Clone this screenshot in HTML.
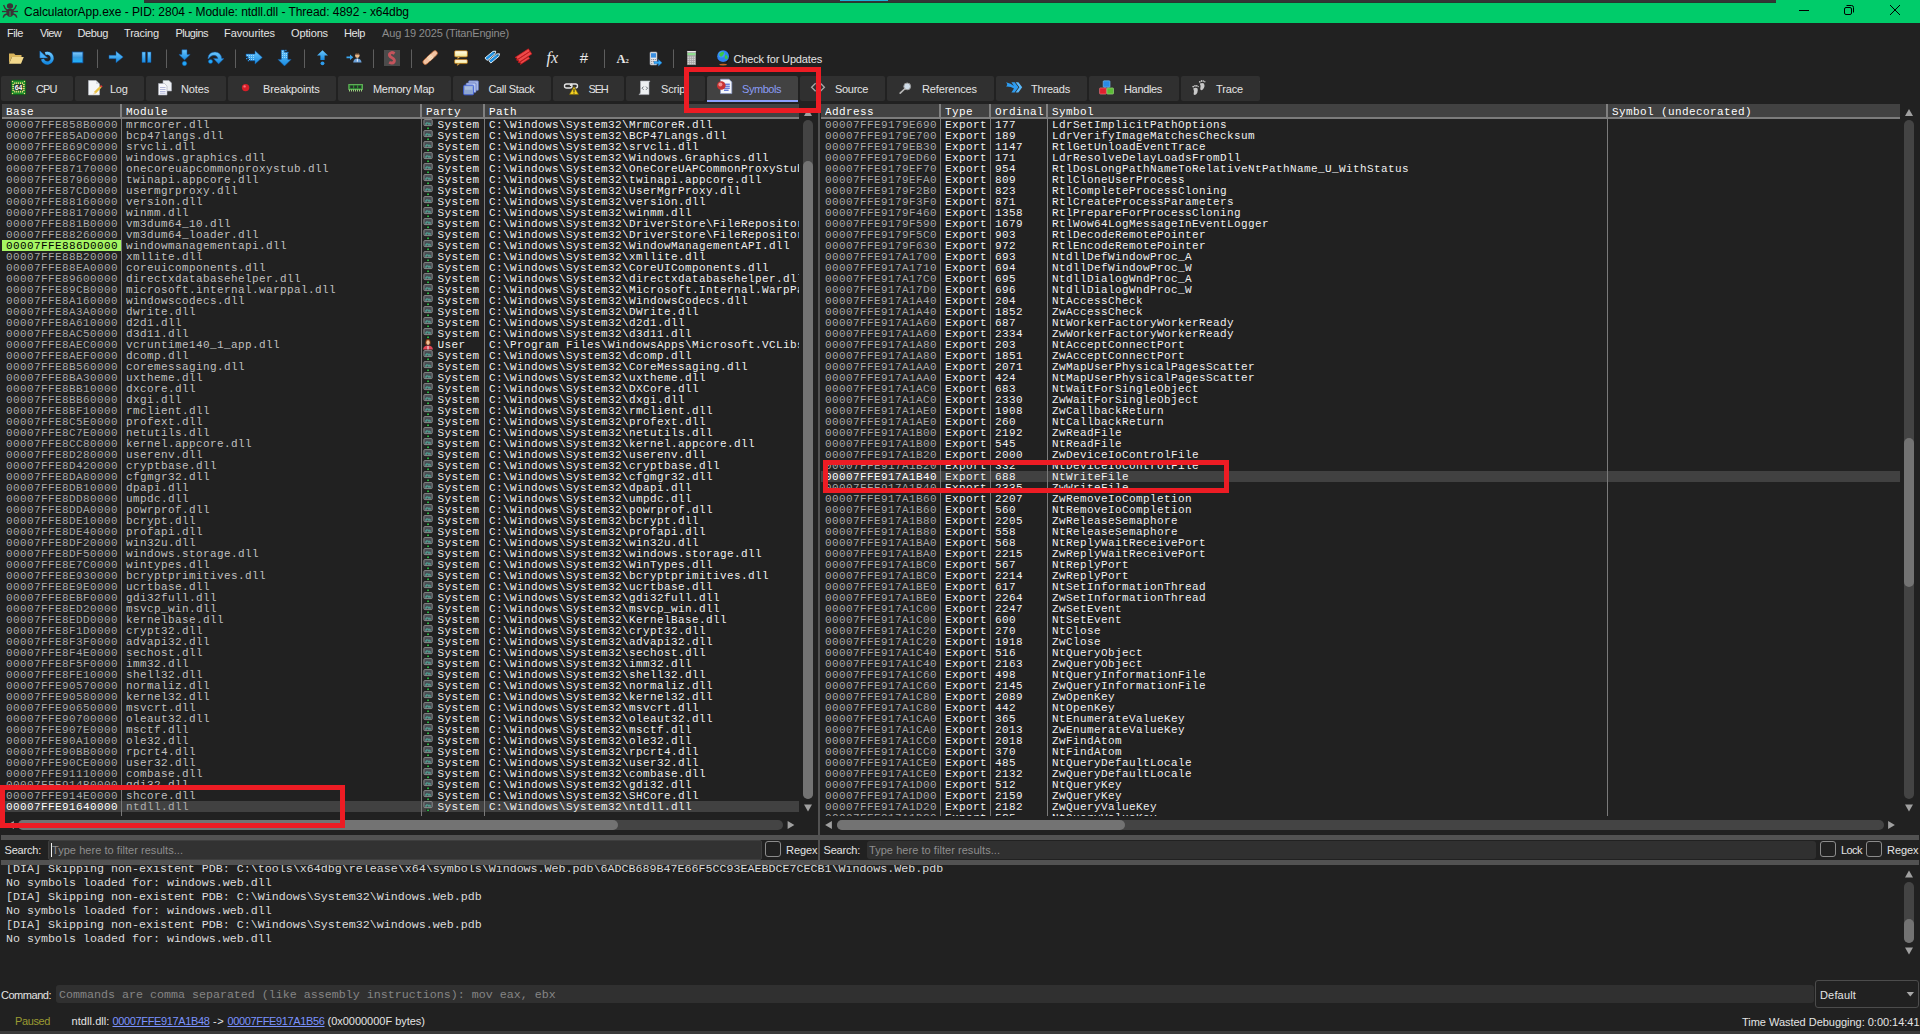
<!DOCTYPE html><html><head><meta charset="utf-8"><title>x64dbg</title><style>
*{margin:0;padding:0;box-sizing:border-box}
html,body{width:1920px;height:1034px;overflow:hidden;background:#212121}
body{position:relative;font-family:"Liberation Sans",sans-serif;font-size:11px;color:#e0e0e0}
.a{position:absolute;white-space:pre}
.ui{position:absolute;white-space:pre;transform-origin:0 50%;font-family:"Liberation Sans",sans-serif;font-size:11px;line-height:14px;height:14px;color:#e4e4e4}
.mono{font-family:"Liberation Mono",monospace;font-size:11px;letter-spacing:0.4px;line-height:11px;white-space:pre}
.tbl{position:absolute;overflow:hidden}
.row{position:absolute;left:0;height:11px;width:100%}
.c{position:absolute;top:0;height:13px;line-height:13px;overflow:hidden}
.hd{position:absolute;top:0;height:13px;background:#424242;color:#ffffff;line-height:16px;overflow:hidden}
.hb{position:absolute;height:2px;background:#7c7c7c}
.vs{position:absolute;width:2px;background:#808080}
.vl{position:absolute;width:1px;background:#7a7a7a}
.tab{position:absolute;top:76px;height:25px;background:#303030;border-radius:2px}
.log{font-family:"Liberation Mono",monospace;font-size:11.67px;line-height:14px;white-space:pre;color:#dcdcdc;position:absolute;left:6px}
.sb{position:absolute;background:#444444;border-radius:5px}
.th{position:absolute;background:#737373;border-radius:5px}
.red{position:absolute;border:5px solid #ed1c24}
svg{position:absolute;overflow:visible}
</style></head><body>
<div class="a" style="left:0;top:0;width:1920px;height:23px;background:#00cc6a"></div>
<div class="a" style="left:144px;top:0;width:1632px;height:3px;background:linear-gradient(#353535 0,#353535 66%,#263a2e 67%)"></div>
<div class="a" style="left:840px;top:0;width:48px;height:1px;background:#19b5d8"></div>
<svg style="left:0px;top:0px" width="20" height="22" viewBox="0 0 20 22"><g fill="#3a3236" stroke="#3a3236"><ellipse cx="10" cy="6" rx="3.1" ry="2.8" stroke="none"/><path d="M6.2 11 Q6.4 8.8 10 8.8 Q13.6 8.8 13.8 11 L13.4 14.6 Q12.4 17 10 17 Q7.6 17 6.6 14.6 Z" stroke="none"/><g fill="none" stroke-width="1.3" stroke-linecap="butt"><path d="M7.2 10 Q4.6 8.6 3.6 5"/><path d="M12.8 10 Q15.4 8.6 16.4 5"/><path d="M2 11.5 H18"/><path d="M7 14 Q3.8 14.6 3.2 17.6"/><path d="M13 14 Q16.2 14.6 16.8 17.6"/></g></g><rect x="9.4" y="11" width="1.2" height="5.4" fill="#149a54"/></svg>
<div class="ui" style="letter-spacing:-0.041px;left:24px;top:4px;font-size:12px;line-height:16px;height:16px;color:#000">CalculatorApp.exe - PID: 2804 - Module: ntdll.dll - Thread: 4892 - x64dbg</div>
<svg style="left:0;top:0" width="1920" height="23" viewBox="0 0 1920 23"><g fill="none" stroke="#000" stroke-width="1"><path d="M1799 10.5 H1809"/><rect x="1844.5" y="7.5" width="7" height="7" rx="1.5"/><path d="M1846.5 5.5 H1851.5 Q1853.5 5.5 1853.5 7.5 V12.5"/><path d="M1890 5 L1900 15 M1900 5 L1890 15"/></g></svg>
<div class="ui" style="letter-spacing:-0.434px;left:7px;top:26px">File</div>
<div class="ui" style="letter-spacing:-0.664px;left:40px;top:26px">View</div>
<div class="ui" style="letter-spacing:-0.384px;left:77.5px;top:26px">Debug</div>
<div class="ui" style="letter-spacing:-0.183px;left:124px;top:26px">Tracing</div>
<div class="ui" style="letter-spacing:-0.511px;left:175.5px;top:26px">Plugins</div>
<div class="ui" style="letter-spacing:-0.036px;left:224px;top:26px">Favourites</div>
<div class="ui" style="letter-spacing:-0.132px;left:291px;top:26px">Options</div>
<div class="ui" style="letter-spacing:-0.406px;left:344px;top:26px">Help</div>
<div class="ui" style="letter-spacing:-0.163px;left:382px;top:26px;color:#8c8c8c">Aug 19 2025 (TitanEngine)</div>
<svg style="left:0;top:0" width="1920" height="74" viewBox="0 0 1920 74"><defs><linearGradient id="gb" x1="0" y1="0" x2="0" y2="1"><stop offset="0" stop-color="#6cc8ff"/><stop offset="1" stop-color="#168ae0"/></linearGradient><linearGradient id="gs" x1="0" y1="0" x2="0" y2="1"><stop offset="0" stop-color="#84ccff"/><stop offset="0.5" stop-color="#3a9ade"/><stop offset="1" stop-color="#1cb4ff"/></linearGradient><linearGradient id="gy" x1="0" y1="0" x2="0" y2="1"><stop offset="0" stop-color="#fffdf0"/><stop offset="0.5" stop-color="#fbf2c0"/><stop offset="1" stop-color="#f0e08c"/></linearGradient></defs><rect x="97" y="49.5" width="1" height="18.5" fill="#5e5e5e"/><rect x="166" y="49.5" width="1" height="18.5" fill="#5e5e5e"/><rect x="235" y="49.5" width="1" height="18.5" fill="#5e5e5e"/><rect x="304" y="49.5" width="1" height="18.5" fill="#5e5e5e"/><rect x="373" y="49.5" width="1" height="18.5" fill="#5e5e5e"/><rect x="411" y="49.5" width="1" height="18.5" fill="#5e5e5e"/><rect x="604" y="49.5" width="1" height="18.5" fill="#5e5e5e"/><rect x="673" y="49.5" width="1" height="18.5" fill="#5e5e5e"/><path d="M9 53.5 H14 L15.5 55 H21.5 V57 H12 L9 63.5 Z" fill="#d8b45c"/><path d="M12 57 H23.8 L21 63.7 H9 Z" fill="#f2d88c"/><path d="M45.3 53.6 A4.9 4.9 0 1 1 42.5 59.2" fill="none" stroke="#0c5aa8" stroke-width="3.8" opacity="0.55"/><path d="M45.3 53.6 A4.9 4.9 0 1 1 42.5 59.2" fill="none" stroke="url(#gb)" stroke-width="2.9"/><path d="M39.9 51 V57.9 H47.6 Z" fill="#48b0f8" stroke="#1470c8" stroke-width="0.5"/><rect x="72.3" y="52" width="10.6" height="10.8" fill="url(#gs)" stroke="#0e58a8" stroke-width="0.8"/><path d="M109 55.3 H116 V51.2 L123.2 57 L116 62.8 V58.7 H109 Z" fill="url(#gb)" stroke="#0e58a8" stroke-width="0.5"/><rect x="142" y="52" width="3.4" height="10.5" fill="url(#gb)" stroke="#0e58a8" stroke-width="0.5"/><rect x="147.6" y="52" width="3.4" height="10.5" fill="url(#gb)" stroke="#0e58a8" stroke-width="0.5"/><path d="M181.9 49.8 H187 V54.4 H190.2 L184.5 59.9 L178.9 54.4 H181.9 Z" fill="url(#gb)" stroke="#0e58a8" stroke-width="0.5"/><circle cx="184.5" cy="63.5" r="2.2" fill="#22a8f8" stroke="#0e58a8" stroke-width="0.5"/><path d="M207.8 58.4 Q208.8 52 215 52 Q220.8 52 221.7 58.5 L224 58.5 L218.6 63.9 L213.4 58.5 L217.9 58.5 Q217 55.3 214 55.3 Q210.6 55.3 208.8 58.8 Z" fill="url(#gb)" stroke="#0e58a8" stroke-width="0.5"/><circle cx="210.5" cy="61.5" r="2.1" fill="#22a8f8" stroke="#0e58a8" stroke-width="0.5"/><path d="M246 54 H255 V50.7 L262.3 57.4 L255 64.1 V60.8 H249.8 V58.8 H247.8 V56.6 H246 Z" fill="url(#gb)" stroke="#0e58a8" stroke-width="0.5"/><rect x="246" y="58" width="1.3" height="1.3" fill="#2a90e0"/><rect x="247.8" y="60" width="1.3" height="1.3" fill="#2a90e0"/><g fill="#9cdcff"><rect x="247" y="55" width="1" height="1"/><rect x="249" y="55" width="1" height="1"/><rect x="249" y="57" width="1" height="1"/><rect x="249" y="59" width="1" height="1"/><rect x="251" y="55" width="1" height="1"/><rect x="251" y="57" width="1" height="1"/><rect x="251" y="59" width="1" height="1"/><rect x="253" y="55" width="1" height="1"/><rect x="253" y="57" width="1" height="1"/><rect x="253" y="59" width="1" height="1"/></g><path d="M281.3 50 H284.4 V52.2 H287.8 V59.4 H291.1 L284.5 66 L278 59.4 H281.3 Z" fill="url(#gb)" stroke="#0e58a8" stroke-width="0.5"/><rect x="285.2" y="49.8" width="1.3" height="1.3" fill="#2a90e0"/><rect x="287.2" y="51.9" width="1.3" height="1.3" fill="#2a90e0" opacity="0.8"/><g fill="#9cdcff"><rect x="282" y="51" width="1" height="1"/><rect x="282" y="53" width="1" height="1"/><rect x="282" y="55" width="1" height="1"/><rect x="282" y="57" width="1" height="1"/><rect x="284" y="53" width="1" height="1"/><rect x="284" y="55" width="1" height="1"/><rect x="284" y="57" width="1" height="1"/><rect x="286" y="53" width="1" height="1"/><rect x="286" y="55" width="1" height="1"/><rect x="286" y="57" width="1" height="1"/></g><path d="M320.4 60 V55.5 H317 L322.5 50.3 L328 55.5 H324.6 V60 Z" fill="url(#gb)"/><circle cx="322.5" cy="63.3" r="1.9" fill="#2e9cec"/><path d="M346.5 56.5 H350 V54.5 L353.3 57.3 L350 60 V58.2 H346.5 Z" fill="#3ba6f0"/><circle cx="357.3" cy="55.6" r="2.3" fill="#e8b88a"/><path d="M355 54.6 Q357.3 51.6 359.6 54.6 Z" fill="#4a3020"/><path d="M353.2 62.6 Q353.6 58.4 357.3 58.4 Q361 58.4 361.6 62.6 Z" fill="#6a9fd8"/><rect x="356.8" y="58.6" width="1" height="3" fill="#fff"/><rect x="384" y="50" width="16" height="16" fill="#4b4b4b"/><path d="M394.6 53.5 Q391 51.4 389.6 54 Q388.8 56.2 392 57.8 Q395.4 59.6 394 62 Q392.4 64 389.2 62.2" fill="none" stroke="#c4545c" stroke-width="2.9"/><g transform="rotate(-42.5 430.2 57.6)"><rect x="421.2" y="55.1" width="18" height="5" rx="2.5" fill="#f2c4a2" stroke="#b8602c" stroke-width="0.7"/><rect x="427.8" y="55.3" width="4.8" height="4.6" fill="#f8dcc0"/><path d="M429 56.5 h0.8 M430.8 56.5 h0.8 M429 58.4 h0.8 M430.8 58.4 h0.8" stroke="#e8b078" stroke-width="0.7"/></g><rect x="454.6" y="50.7" width="12.8" height="6.2" rx="1.2" fill="url(#gy)" stroke="#b47410" stroke-width="0.8"/><path d="M457.8 56.8 L457.6 58.8 L460 56.8 Z" fill="#fff4c0" stroke="#b47410" stroke-width="0.5"/><rect x="454.6" y="59.6" width="12.8" height="4" rx="1.2" fill="url(#gy)" stroke="#b47410" stroke-width="0.8"/><path d="M457.8 63.5 L457.2 65.6 L460 63.5 Z" fill="#fff4c0" stroke="#b47410" stroke-width="0.5"/><g transform="translate(486 59.2) rotate(-39.5)"><path d="M0 -1.6 H10.4 L12.6 0 L10.4 1.6 H0 Z" fill="#1e8fe0" stroke="#f4faff" stroke-width="0.8"/><circle cx="10.6" cy="0" r="0.55" fill="#202020"/></g><g transform="translate(489.8 61.8) rotate(-39.5)"><path d="M0 -1.6 H10.4 L12.6 0 L10.4 1.6 H0 Z" fill="#1e8fe0" stroke="#f4faff" stroke-width="0.8"/><circle cx="10.6" cy="0" r="0.55" fill="#202020"/></g><g transform="translate(515.8 58.8) rotate(-33)"><path d="M0 -1.5 H16 V1.5 H0 L1.6 0 Z" fill="#ee4a4a" stroke="#cc1418" stroke-width="0.6"/></g><g transform="translate(517.6 61.4) rotate(-33)"><path d="M0 -1.5 H16 V1.5 H0 L1.6 0 Z" fill="#ee4a4a" stroke="#cc1418" stroke-width="0.6"/></g><g transform="translate(519.8 63.6) rotate(-33)"><path d="M0 -1.1 H11 V1.1 H0 L1.4 0 Z" fill="#ee4a4a" stroke="#cc1418" stroke-width="0.6"/></g></svg><div class="a" style="left:546.5px;top:48px;font-family:'Liberation Serif',serif;font-style:italic;font-size:16px;line-height:20px;color:#e8e8e8">fx</div><div class="a" style="left:579.5px;top:50px;font-family:'Liberation Sans',sans-serif;font-style:italic;font-size:15px;line-height:16px;color:#e8e8e8">#</div><div class="a" style="left:616.5px;top:51px;font-family:'Liberation Serif',serif;font-weight:bold;font-size:12.5px;line-height:16px;color:#e8e8e8">A<span style="font-size:6.5px">2</span></div><svg style="left:0;top:0" width="1920" height="74" viewBox="0 0 1920 74"><rect x="650" y="52" width="7" height="13" rx="1" fill="#e6e8ec" stroke="#9a9ea8" stroke-width="0.6"/><rect x="651" y="53.2" width="5" height="4.4" fill="#3a8ee0"/><g fill="#8a8e98"><rect x="651.2" y="59" width="1.1" height="1.1"/><rect x="653" y="59" width="1.1" height="1.1"/><rect x="654.8" y="59" width="1.1" height="1.1"/><rect x="651.2" y="61" width="1.1" height="1.1"/><rect x="653" y="61" width="1.1" height="1.1"/><rect x="651.2" y="63" width="1.1" height="1.1"/></g><path d="M654 61.6 H658.4 V59.4 L662 62.7 L658.4 66 V63.8 H654 Z" fill="#36acf8" stroke="#1468c0" stroke-width="0.5"/><rect x="686.7" y="50.4" width="9.7" height="15" rx="0.8" fill="#a6a6a6" stroke="#141414" stroke-width="0.9"/><rect x="687.4" y="51" width="8.3" height="1.2" fill="#e8e8e8"/><rect x="687.6" y="53" width="7.9" height="2.2" fill="#8ede8e"/><g fill="#d2d2d2"><rect x="687.7" y="56.6" width="1.3" height="1.3"/><rect x="687.7" y="58.7" width="1.3" height="1.3"/><rect x="687.7" y="60.800000000000004" width="1.3" height="1.3"/><rect x="687.7" y="62.900000000000006" width="1.3" height="1.3"/><rect x="689.7" y="56.6" width="1.3" height="1.3"/><rect x="689.7" y="58.7" width="1.3" height="1.3"/><rect x="689.7" y="60.800000000000004" width="1.3" height="1.3"/><rect x="689.7" y="62.900000000000006" width="1.3" height="1.3"/><rect x="691.7" y="56.6" width="1.3" height="1.3"/><rect x="691.7" y="58.7" width="1.3" height="1.3"/><rect x="691.7" y="60.800000000000004" width="1.3" height="1.3"/><rect x="691.7" y="62.900000000000006" width="1.3" height="1.3"/><rect x="693.7" y="56.6" width="1.3" height="1.3"/><rect x="693.7" y="58.7" width="1.3" height="1.3"/><rect x="693.7" y="60.800000000000004" width="1.3" height="1.3"/><rect x="693.7" y="62.900000000000006" width="1.3" height="1.3"/></g><path d="M727.6 51.4 Q731.6 57.4 726.4 63" fill="none" stroke="#141414" stroke-width="1"/><circle cx="723.1" cy="56.2" r="5.9" fill="#2c84f0"/><circle cx="721.6" cy="54.4" r="3.2" fill="#5aa8ff" opacity="0.55"/><path d="M719.4 53.8 Q721 52 723.4 51.6 Q725 53 723.4 54.6 Q722.4 57 720.4 56.6 Q718.8 55.6 719.4 53.8 Z M725.4 54.6 Q728 55.4 727.8 58 Q726.6 60 725 58.6 Q724.4 56.4 725.4 54.6 Z" fill="#38c848"/><ellipse cx="723.1" cy="64.6" rx="3.8" ry="0.9" fill="#c86420"/></svg>
<div class="ui" style="letter-spacing:-0.153px;left:733.5px;top:52px">Check for Updates</div>
<div class="tab" style="left:1px;width:72px;height:25px;background:#303030"></div>
<div class="ui" style="letter-spacing:-0.845px;left:36px;top:82px;color:#e4e4e4">CPU</div>
<svg style="left:11px;top:80px" width="16" height="16" viewBox="0 0 16 16"><rect x="0.4" y="0.2" width="14.3" height="14.4" rx="0.8" fill="#22922e" stroke="#0c5c14" stroke-width="0.8"/><g fill="#f2dc80"><rect x="3.3" y="2.3" width="1" height="2"/><rect x="3.3" y="10.5" width="1" height="2"/><rect x="5.2" y="2.3" width="1" height="2"/><rect x="5.2" y="10.5" width="1" height="2"/><rect x="7.1" y="2.3" width="1" height="2"/><rect x="7.1" y="10.5" width="1" height="2"/><rect x="9.0" y="2.3" width="1" height="2"/><rect x="9.0" y="10.5" width="1" height="2"/><rect x="10.9" y="2.3" width="1" height="2"/><rect x="10.9" y="10.5" width="1" height="2"/><rect x="1.3" y="4.1" width="2" height="1"/><rect x="11.7" y="4.1" width="2" height="1"/><rect x="1.3" y="6.0" width="2" height="1"/><rect x="11.7" y="6.0" width="2" height="1"/><rect x="1.3" y="7.9" width="2" height="1"/><rect x="11.7" y="7.9" width="2" height="1"/><rect x="1.3" y="9.8" width="2" height="1"/><rect x="11.7" y="9.8" width="2" height="1"/><rect x="0.9" y="0.9" width="1.2" height="1.2"/><rect x="12.9" y="0.9" width="1.2" height="1.2"/><rect x="0.9" y="12.9" width="1.2" height="1.2"/><rect x="12.9" y="12.9" width="1.2" height="1.2"/></g><rect x="3.3" y="4.2" width="8.5" height="6.4" rx="0.6" fill="#262626"/><text x="7.55" y="10" font-family="Liberation Sans" font-weight="bold" font-size="7" fill="#fff" text-anchor="middle">64</text></svg>
<div class="tab" style="left:75px;width:69px;height:25px;background:#303030"></div>
<div class="ui" style="letter-spacing:-0.286px;left:110px;top:82px;color:#e4e4e4">Log</div>
<svg style="left:87px;top:80px" width="16" height="16" viewBox="0 0 16 16"><path d="M1.5 0.5 H9 L12.5 4 V15 H1.5 Z" fill="#f4f6f8" stroke="#b8bcc4" stroke-width="0.6"/><path d="M9 0.5 V4 H12.5" fill="#d8dce4"/><path d="M6.5 14.4 L7.4 11.6 L13 6 L14.6 7.6 L9 13.2 Z" fill="#e8c040"/><path d="M13 6 L14 5 L15.6 6.6 L14.6 7.6 Z" fill="#e83838"/><path d="M6.5 14.4 L7.4 11.6 L9 13.2 Z" fill="#f0d8b0"/></svg>
<div class="tab" style="left:146px;width:80px;height:25px;background:#303030"></div>
<div class="ui" style="letter-spacing:-0.150px;left:181px;top:82px;color:#e4e4e4">Notes</div>
<svg style="left:157px;top:80px" width="16" height="16" viewBox="0 0 16 16"><path d="M6 0.5 H12 L14.5 3 V11 H6 Z" fill="#eef0f4" stroke="#a8acb8" stroke-width="0.6"/><path d="M1.5 3.5 H7.5 L10 6 V15 H1.5 Z" fill="#f8f8fc" stroke="#a8acb8" stroke-width="0.6"/><path d="M3 7.5 H8.5 M3 9.5 H8.5 M3 11.5 H8.5 M3 13.2 H8.5" stroke="#8890c8" stroke-width="0.6"/></svg>
<div class="tab" style="left:228px;width:108px;height:25px;background:#303030"></div>
<div class="ui" style="letter-spacing:-0.145px;left:263px;top:82px;color:#e4e4e4">Breakpoints</div>
<svg style="left:238px;top:80px" width="16" height="16" viewBox="0 0 16 16"><circle cx="7.6" cy="7.6" r="3.7" fill="#d81e28"/><circle cx="6.6" cy="6.4" r="1.2" fill="#f87078"/></svg>
<div class="tab" style="left:338px;width:113px;height:25px;background:#303030"></div>
<div class="ui" style="letter-spacing:-0.319px;left:373px;top:82px;color:#e4e4e4">Memory Map</div>
<svg style="left:348px;top:80px" width="16" height="16" viewBox="0 0 16 16"><rect x="0.8" y="4.4" width="13.6" height="5.2" fill="#2f8a34" stroke="#6cc060" stroke-width="0.8"/><g fill="#26302a"><rect x="2.2" y="5.6" width="2.8" height="2.6"/><rect x="6.2" y="5.6" width="2.8" height="2.6"/><rect x="10.2" y="5.6" width="2.8" height="2.6"/></g><path d="M1 10.6 H14.4" stroke="#9cd080" stroke-width="2" stroke-dasharray="1 1"/></svg>
<div class="tab" style="left:453px;width:98px;height:25px;background:#303030"></div>
<div class="ui" style="letter-spacing:-0.353px;left:488.5px;top:82px;color:#e4e4e4">Call Stack</div>
<svg style="left:463px;top:80px" width="16" height="16" viewBox="0 0 16 16"><rect x="5.5" y="0.8" width="10" height="9.6" rx="1" fill="#a8b8e8" stroke="#5a6eb8" stroke-width="0.7"/><rect x="3" y="3" width="10" height="9.6" rx="1" fill="#b8c8f0" stroke="#5a6eb8" stroke-width="0.7"/><rect x="0.6" y="5.2" width="10" height="9.6" rx="1.2" fill="#8ea6d0" stroke="#3c5cdc" stroke-width="0.9"/><rect x="2" y="6.4" width="7.2" height="3.4" fill="#b4c6e4" opacity="0.7"/></svg>
<div class="tab" style="left:553px;width:71px;height:25px;background:#303030"></div>
<div class="ui" style="letter-spacing:-1.208px;left:588.5px;top:82px;color:#e4e4e4">SEH</div>
<svg style="left:563px;top:80px" width="16" height="16" viewBox="0 0 16 16"><path d="M1.5 6 Q1.5 4 3.5 4 H7 Q9 4 9 6 Q9 8 7 8 H3.5 Q1.5 8 1.5 6 Z M7.5 6 Q7.5 4 9.5 4 H12.5 Q14.5 4 14.5 6 Q14.5 8 12.5 8" fill="none" stroke="#e4e4e4" stroke-width="1.4"/><path d="M11 6.5 L15.6 14.6 H6.4 Z" fill="#f4d020" stroke="#6a5a08" stroke-width="0.6"/><rect x="10.5" y="9" width="1" height="3" fill="#202020"/><rect x="10.5" y="12.6" width="1" height="1" fill="#202020"/></svg>
<div class="tab" style="left:626px;width:79px;height:25px;background:#303030"></div>
<div class="ui" style="letter-spacing:-0.188px;left:661px;top:82px;color:#e4e4e4">Script</div>
<svg style="left:636.5px;top:80px" width="16" height="16" viewBox="0 0 16 16"><path d="M3.5 1 H13 Q11.6 2.4 12 4 V14.6 H2 Q3.8 13.4 3.5 11.6 Z" fill="#eef0f2" stroke="#b0b4bc" stroke-width="0.6"/><path d="M6.6 6.6 L5 8.2 L6.6 9.8 M9 6.6 L10.6 8.2 L9 9.8" fill="none" stroke="#5a6068" stroke-width="0.9"/></svg>
<div class="tab" style="left:707px;width:91px;height:26px;background:#424242"></div>
<div class="a" style="left:707px;top:100px;width:91px;height:2px;background:#8c9efa"></div>
<div class="ui" style="letter-spacing:-0.455px;left:742px;top:82px;color:#8a9cf5">Symbols</div>
<svg style="left:716px;top:80px" width="16" height="16" viewBox="0 0 16 16"><path d="M4.5 -0.8 H13 L15.8 2 V13.6 H4.5 Z" fill="#f4f6fa" stroke="#8a98c8" stroke-width="0.7"/><path d="M8 4.2 H13.8 M8 6.2 H13.8 M8 8.2 H13.8 M8 10.2 H12.6" stroke="#2a48c8" stroke-width="1"/><circle cx="5.3" cy="5.5" r="4.3" fill="#c83232"/><circle cx="4.4" cy="4.4" r="2" fill="#f09090"/></svg>
<div class="tab" style="left:800px;width:85px;height:25px;background:#303030"></div>
<div class="ui" style="letter-spacing:-0.310px;left:835px;top:82px;color:#e4e4e4">Source</div>
<svg style="left:810px;top:80px" width="16" height="16" viewBox="0 0 16 16"><path d="M5.6 3.2 L1.6 7.2 L5.6 11.2 M10.4 3.2 L14.4 7.2 L10.4 11.2" fill="none" stroke="#a8a8a8" stroke-width="1.3"/></svg>
<div class="tab" style="left:887px;width:107px;height:25px;background:#303030"></div>
<div class="ui" style="letter-spacing:-0.127px;left:922px;top:82px;color:#e4e4e4">References</div>
<svg style="left:897px;top:80px" width="16" height="16" viewBox="0 0 16 16"><circle cx="10.2" cy="6.4" r="3.4" fill="#d0dce8" stroke="#989898" stroke-width="1"/><path d="M7.6 9 L3.2 13.2" stroke="#b8b8b8" stroke-width="1.7" stroke-linecap="round"/></svg>
<div class="tab" style="left:996px;width:90.5px;height:25px;background:#303030"></div>
<div class="ui" style="letter-spacing:-0.194px;left:1031px;top:82px;color:#e4e4e4">Threads</div>
<svg style="left:1006px;top:80px" width="16" height="16" viewBox="0 0 16 16"><path d="M0 2.2 Q5 3.4 8 6 L5.4 2.2 L8.6 2.2 L12.4 7.2 L8.6 12.4 L5.4 12.4 L8 8.6 Q5 6.4 0 6.6 Q2.4 4.6 0 2.2 Z" fill="#2e9cf0"/><path d="M9.6 2.2 L12.4 2.2 L16.2 7.2 L12.4 12.4 L9.6 12.4 L13.4 7.2 Z" fill="#5ab8fa"/></svg>
<div class="tab" style="left:1089px;width:89.5px;height:25px;background:#303030"></div>
<div class="ui" style="letter-spacing:-0.337px;left:1124px;top:82px;color:#e4e4e4">Handles</div>
<svg style="left:1099px;top:80px" width="16" height="16" viewBox="0 0 16 16"><rect x="4.2" y="0.8" width="6.8" height="6.4" rx="0.8" fill="#2a8ae4" stroke="#7cc0f8" stroke-width="0.6"/><rect x="0.6" y="7.9" width="6.8" height="6.2" rx="0.8" fill="#e0202e" stroke="#f88088" stroke-width="0.6"/><rect x="7.9" y="7.9" width="6.6" height="6.2" rx="0.8" fill="#5cbc38" stroke="#a8e088" stroke-width="0.6"/></svg>
<div class="tab" style="left:1181px;width:79px;height:25px;background:#303030"></div>
<div class="ui" style="letter-spacing:-0.144px;left:1216px;top:82px;color:#e4e4e4">Trace</div>
<svg style="left:1191px;top:80px" width="16" height="16" viewBox="0 0 16 16"><g fill="#c8c8c8"><path d="M2.2 8.4 Q4.6 7.2 6.4 8.2 Q7.4 10.4 6.4 12.6 Q5.4 15.2 3.6 15 Q2 14.6 2.8 12.4 Q3.2 10.6 2.2 8.4 Z"/><circle cx="2.2" cy="6.6" r="0.9"/><circle cx="4" cy="5.8" r="0.9"/><circle cx="5.8" cy="5.8" r="0.85"/><circle cx="7.2" cy="6.6" r="0.7"/><path d="M8.8 3.6 Q11.2 2.4 13 3.4 Q14 5.6 13 7.8 Q12 10.4 10.2 10.2 Q8.6 9.8 9.4 7.6 Q9.8 5.8 8.8 3.6 Z"/><circle cx="8.8" cy="1.8" r="0.9"/><circle cx="10.6" cy="1" r="0.9"/><circle cx="12.4" cy="1" r="0.85"/><circle cx="13.8" cy="1.8" r="0.7"/></g></svg>
<div class="tbl mono" style="left:2px;top:104px;width:797px;height:712px">
<div class="hd" style="left:0;width:797px"></div>
<div class="hd" style="left:4px;background:none">Base</div>
<div class="hd" style="left:124px;background:none">Module</div>
<div class="hd" style="left:424px;background:none">Party</div>
<div class="hd" style="left:487px;background:none">Path</div>
<div class="hb" style="left:0;top:13px;width:797px"></div>
<div class="vs" style="left:118px;top:0;height:15px"></div>
<div class="vl" style="left:119px;top:15px;height:698px"></div>
<div class="vs" style="left:418px;top:0;height:15px"></div>
<div class="vl" style="left:419px;top:15px;height:698px"></div>
<div class="vs" style="left:481px;top:0;height:15px"></div>
<div class="vl" style="left:482px;top:15px;height:698px"></div>
<div class="row" style="top:15px;">
<div class="c" style="left:4px;width:114px;color:#a8a8a8;">00007FFE858B0000</div>
<div class="c" style="left:124px;width:294px;color:#c0c0c0;">mrmcorer.dll</div>
<svg style="left:421px;top:0px" width="10" height="11" viewBox="0 0 10 11"><rect x="0.9" y="0.6" width="8.3" height="6" rx="0.9" fill="#484c52" stroke="#929292" stroke-width="0.9"/><path d="M2 5 H4 V3 M5 5 H8 M6 5 V3.5" stroke="#56b4a0" stroke-width="1" fill="none"/><rect x="3.4" y="8" width="3.2" height="2.6" fill="#1a1a1a"/><rect x="4.1" y="8.5" width="1.9" height="1.6" fill="#2cb846"/></svg>
<div class="c" style="left:435.5px;width:46px;color:#f0f0f0;">System</div>
<div class="c" style="left:487px;width:310px;color:#f0f0f0;">C:\Windows\System32\MrmCoreR.dll</div>
</div>
<div class="row" style="top:26px;">
<div class="c" style="left:4px;width:114px;color:#a8a8a8;">00007FFE85AD0000</div>
<div class="c" style="left:124px;width:294px;color:#c0c0c0;">bcp47langs.dll</div>
<svg style="left:421px;top:0px" width="10" height="11" viewBox="0 0 10 11"><rect x="0.9" y="0.6" width="8.3" height="6" rx="0.9" fill="#484c52" stroke="#929292" stroke-width="0.9"/><path d="M2 5 H4 V3 M5 5 H8 M6 5 V3.5" stroke="#56b4a0" stroke-width="1" fill="none"/><rect x="3.4" y="8" width="3.2" height="2.6" fill="#1a1a1a"/><rect x="4.1" y="8.5" width="1.9" height="1.6" fill="#2cb846"/></svg>
<div class="c" style="left:435.5px;width:46px;color:#f0f0f0;">System</div>
<div class="c" style="left:487px;width:310px;color:#f0f0f0;">C:\Windows\System32\BCP47Langs.dll</div>
</div>
<div class="row" style="top:37px;">
<div class="c" style="left:4px;width:114px;color:#a8a8a8;">00007FFE869C0000</div>
<div class="c" style="left:124px;width:294px;color:#c0c0c0;">srvcli.dll</div>
<svg style="left:421px;top:0px" width="10" height="11" viewBox="0 0 10 11"><rect x="0.9" y="0.6" width="8.3" height="6" rx="0.9" fill="#484c52" stroke="#929292" stroke-width="0.9"/><path d="M2 5 H4 V3 M5 5 H8 M6 5 V3.5" stroke="#56b4a0" stroke-width="1" fill="none"/><rect x="3.4" y="8" width="3.2" height="2.6" fill="#1a1a1a"/><rect x="4.1" y="8.5" width="1.9" height="1.6" fill="#2cb846"/></svg>
<div class="c" style="left:435.5px;width:46px;color:#f0f0f0;">System</div>
<div class="c" style="left:487px;width:310px;color:#f0f0f0;">C:\Windows\System32\srvcli.dll</div>
</div>
<div class="row" style="top:48px;">
<div class="c" style="left:4px;width:114px;color:#a8a8a8;">00007FFE86CF0000</div>
<div class="c" style="left:124px;width:294px;color:#c0c0c0;">windows.graphics.dll</div>
<svg style="left:421px;top:0px" width="10" height="11" viewBox="0 0 10 11"><rect x="0.9" y="0.6" width="8.3" height="6" rx="0.9" fill="#484c52" stroke="#929292" stroke-width="0.9"/><path d="M2 5 H4 V3 M5 5 H8 M6 5 V3.5" stroke="#56b4a0" stroke-width="1" fill="none"/><rect x="3.4" y="8" width="3.2" height="2.6" fill="#1a1a1a"/><rect x="4.1" y="8.5" width="1.9" height="1.6" fill="#2cb846"/></svg>
<div class="c" style="left:435.5px;width:46px;color:#f0f0f0;">System</div>
<div class="c" style="left:487px;width:310px;color:#f0f0f0;">C:\Windows\System32\Windows.Graphics.dll</div>
</div>
<div class="row" style="top:59px;">
<div class="c" style="left:4px;width:114px;color:#a8a8a8;">00007FFE87170000</div>
<div class="c" style="left:124px;width:294px;color:#c0c0c0;">onecoreuapcommonproxystub.dll</div>
<svg style="left:421px;top:0px" width="10" height="11" viewBox="0 0 10 11"><rect x="0.9" y="0.6" width="8.3" height="6" rx="0.9" fill="#484c52" stroke="#929292" stroke-width="0.9"/><path d="M2 5 H4 V3 M5 5 H8 M6 5 V3.5" stroke="#56b4a0" stroke-width="1" fill="none"/><rect x="3.4" y="8" width="3.2" height="2.6" fill="#1a1a1a"/><rect x="4.1" y="8.5" width="1.9" height="1.6" fill="#2cb846"/></svg>
<div class="c" style="left:435.5px;width:46px;color:#f0f0f0;">System</div>
<div class="c" style="left:487px;width:310px;color:#f0f0f0;">C:\Windows\System32\OneCoreUAPCommonProxyStub.dll</div>
</div>
<div class="row" style="top:70px;">
<div class="c" style="left:4px;width:114px;color:#a8a8a8;">00007FFE87960000</div>
<div class="c" style="left:124px;width:294px;color:#c0c0c0;">twinapi.appcore.dll</div>
<svg style="left:421px;top:0px" width="10" height="11" viewBox="0 0 10 11"><rect x="0.9" y="0.6" width="8.3" height="6" rx="0.9" fill="#484c52" stroke="#929292" stroke-width="0.9"/><path d="M2 5 H4 V3 M5 5 H8 M6 5 V3.5" stroke="#56b4a0" stroke-width="1" fill="none"/><rect x="3.4" y="8" width="3.2" height="2.6" fill="#1a1a1a"/><rect x="4.1" y="8.5" width="1.9" height="1.6" fill="#2cb846"/></svg>
<div class="c" style="left:435.5px;width:46px;color:#f0f0f0;">System</div>
<div class="c" style="left:487px;width:310px;color:#f0f0f0;">C:\Windows\System32\twinapi.appcore.dll</div>
</div>
<div class="row" style="top:81px;">
<div class="c" style="left:4px;width:114px;color:#a8a8a8;">00007FFE87CD0000</div>
<div class="c" style="left:124px;width:294px;color:#c0c0c0;">usermgrproxy.dll</div>
<svg style="left:421px;top:0px" width="10" height="11" viewBox="0 0 10 11"><rect x="0.9" y="0.6" width="8.3" height="6" rx="0.9" fill="#484c52" stroke="#929292" stroke-width="0.9"/><path d="M2 5 H4 V3 M5 5 H8 M6 5 V3.5" stroke="#56b4a0" stroke-width="1" fill="none"/><rect x="3.4" y="8" width="3.2" height="2.6" fill="#1a1a1a"/><rect x="4.1" y="8.5" width="1.9" height="1.6" fill="#2cb846"/></svg>
<div class="c" style="left:435.5px;width:46px;color:#f0f0f0;">System</div>
<div class="c" style="left:487px;width:310px;color:#f0f0f0;">C:\Windows\System32\UserMgrProxy.dll</div>
</div>
<div class="row" style="top:92px;">
<div class="c" style="left:4px;width:114px;color:#a8a8a8;">00007FFE88160000</div>
<div class="c" style="left:124px;width:294px;color:#c0c0c0;">version.dll</div>
<svg style="left:421px;top:0px" width="10" height="11" viewBox="0 0 10 11"><rect x="0.9" y="0.6" width="8.3" height="6" rx="0.9" fill="#484c52" stroke="#929292" stroke-width="0.9"/><path d="M2 5 H4 V3 M5 5 H8 M6 5 V3.5" stroke="#56b4a0" stroke-width="1" fill="none"/><rect x="3.4" y="8" width="3.2" height="2.6" fill="#1a1a1a"/><rect x="4.1" y="8.5" width="1.9" height="1.6" fill="#2cb846"/></svg>
<div class="c" style="left:435.5px;width:46px;color:#f0f0f0;">System</div>
<div class="c" style="left:487px;width:310px;color:#f0f0f0;">C:\Windows\System32\version.dll</div>
</div>
<div class="row" style="top:103px;">
<div class="c" style="left:4px;width:114px;color:#a8a8a8;">00007FFE88170000</div>
<div class="c" style="left:124px;width:294px;color:#c0c0c0;">winmm.dll</div>
<svg style="left:421px;top:0px" width="10" height="11" viewBox="0 0 10 11"><rect x="0.9" y="0.6" width="8.3" height="6" rx="0.9" fill="#484c52" stroke="#929292" stroke-width="0.9"/><path d="M2 5 H4 V3 M5 5 H8 M6 5 V3.5" stroke="#56b4a0" stroke-width="1" fill="none"/><rect x="3.4" y="8" width="3.2" height="2.6" fill="#1a1a1a"/><rect x="4.1" y="8.5" width="1.9" height="1.6" fill="#2cb846"/></svg>
<div class="c" style="left:435.5px;width:46px;color:#f0f0f0;">System</div>
<div class="c" style="left:487px;width:310px;color:#f0f0f0;">C:\Windows\System32\winmm.dll</div>
</div>
<div class="row" style="top:114px;">
<div class="c" style="left:4px;width:114px;color:#a8a8a8;">00007FFE881B0000</div>
<div class="c" style="left:124px;width:294px;color:#c0c0c0;">vm3dum64_10.dll</div>
<svg style="left:421px;top:0px" width="10" height="11" viewBox="0 0 10 11"><rect x="0.9" y="0.6" width="8.3" height="6" rx="0.9" fill="#484c52" stroke="#929292" stroke-width="0.9"/><path d="M2 5 H4 V3 M5 5 H8 M6 5 V3.5" stroke="#56b4a0" stroke-width="1" fill="none"/><rect x="3.4" y="8" width="3.2" height="2.6" fill="#1a1a1a"/><rect x="4.1" y="8.5" width="1.9" height="1.6" fill="#2cb846"/></svg>
<div class="c" style="left:435.5px;width:46px;color:#f0f0f0;">System</div>
<div class="c" style="left:487px;width:310px;color:#f0f0f0;">C:\Windows\System32\DriverStore\FileRepository\vm3d.inf_amd64_6e1c8a9b2f3d4c5e\vm3dum64_10.dll</div>
</div>
<div class="row" style="top:125px;">
<div class="c" style="left:4px;width:114px;color:#a8a8a8;">00007FFE88260000</div>
<div class="c" style="left:124px;width:294px;color:#c0c0c0;">vm3dum64_loader.dll</div>
<svg style="left:421px;top:0px" width="10" height="11" viewBox="0 0 10 11"><rect x="0.9" y="0.6" width="8.3" height="6" rx="0.9" fill="#484c52" stroke="#929292" stroke-width="0.9"/><path d="M2 5 H4 V3 M5 5 H8 M6 5 V3.5" stroke="#56b4a0" stroke-width="1" fill="none"/><rect x="3.4" y="8" width="3.2" height="2.6" fill="#1a1a1a"/><rect x="4.1" y="8.5" width="1.9" height="1.6" fill="#2cb846"/></svg>
<div class="c" style="left:435.5px;width:46px;color:#f0f0f0;">System</div>
<div class="c" style="left:487px;width:310px;color:#f0f0f0;">C:\Windows\System32\DriverStore\FileRepository\vm3d.inf_amd64_6e1c8a9b2f3d4c5e\vm3dum64_loader.dll</div>
</div>
<div class="row" style="top:136px;">
<div class="c" style="left:0;width:119px;height:11px;background:#a5f563"></div>
<div class="c" style="left:4px;width:114px;color:#000;">00007FFE886D0000</div>
<div class="c" style="left:124px;width:294px;color:#c0c0c0;">windowmanagementapi.dll</div>
<svg style="left:421px;top:0px" width="10" height="11" viewBox="0 0 10 11"><rect x="0.9" y="0.6" width="8.3" height="6" rx="0.9" fill="#484c52" stroke="#929292" stroke-width="0.9"/><path d="M2 5 H4 V3 M5 5 H8 M6 5 V3.5" stroke="#56b4a0" stroke-width="1" fill="none"/><rect x="3.4" y="8" width="3.2" height="2.6" fill="#1a1a1a"/><rect x="4.1" y="8.5" width="1.9" height="1.6" fill="#2cb846"/></svg>
<div class="c" style="left:435.5px;width:46px;color:#f0f0f0;">System</div>
<div class="c" style="left:487px;width:310px;color:#f0f0f0;">C:\Windows\System32\WindowManagementAPI.dll</div>
</div>
<div class="row" style="top:147px;">
<div class="c" style="left:4px;width:114px;color:#a8a8a8;">00007FFE88B20000</div>
<div class="c" style="left:124px;width:294px;color:#c0c0c0;">xmllite.dll</div>
<svg style="left:421px;top:0px" width="10" height="11" viewBox="0 0 10 11"><rect x="0.9" y="0.6" width="8.3" height="6" rx="0.9" fill="#484c52" stroke="#929292" stroke-width="0.9"/><path d="M2 5 H4 V3 M5 5 H8 M6 5 V3.5" stroke="#56b4a0" stroke-width="1" fill="none"/><rect x="3.4" y="8" width="3.2" height="2.6" fill="#1a1a1a"/><rect x="4.1" y="8.5" width="1.9" height="1.6" fill="#2cb846"/></svg>
<div class="c" style="left:435.5px;width:46px;color:#f0f0f0;">System</div>
<div class="c" style="left:487px;width:310px;color:#f0f0f0;">C:\Windows\System32\xmllite.dll</div>
</div>
<div class="row" style="top:158px;">
<div class="c" style="left:4px;width:114px;color:#a8a8a8;">00007FFE88EA0000</div>
<div class="c" style="left:124px;width:294px;color:#c0c0c0;">coreuicomponents.dll</div>
<svg style="left:421px;top:0px" width="10" height="11" viewBox="0 0 10 11"><rect x="0.9" y="0.6" width="8.3" height="6" rx="0.9" fill="#484c52" stroke="#929292" stroke-width="0.9"/><path d="M2 5 H4 V3 M5 5 H8 M6 5 V3.5" stroke="#56b4a0" stroke-width="1" fill="none"/><rect x="3.4" y="8" width="3.2" height="2.6" fill="#1a1a1a"/><rect x="4.1" y="8.5" width="1.9" height="1.6" fill="#2cb846"/></svg>
<div class="c" style="left:435.5px;width:46px;color:#f0f0f0;">System</div>
<div class="c" style="left:487px;width:310px;color:#f0f0f0;">C:\Windows\System32\CoreUIComponents.dll</div>
</div>
<div class="row" style="top:169px;">
<div class="c" style="left:4px;width:114px;color:#a8a8a8;">00007FFE89600000</div>
<div class="c" style="left:124px;width:294px;color:#c0c0c0;">directxdatabasehelper.dll</div>
<svg style="left:421px;top:0px" width="10" height="11" viewBox="0 0 10 11"><rect x="0.9" y="0.6" width="8.3" height="6" rx="0.9" fill="#484c52" stroke="#929292" stroke-width="0.9"/><path d="M2 5 H4 V3 M5 5 H8 M6 5 V3.5" stroke="#56b4a0" stroke-width="1" fill="none"/><rect x="3.4" y="8" width="3.2" height="2.6" fill="#1a1a1a"/><rect x="4.1" y="8.5" width="1.9" height="1.6" fill="#2cb846"/></svg>
<div class="c" style="left:435.5px;width:46px;color:#f0f0f0;">System</div>
<div class="c" style="left:487px;width:310px;color:#f0f0f0;">C:\Windows\System32\directxdatabasehelper.dll</div>
</div>
<div class="row" style="top:180px;">
<div class="c" style="left:4px;width:114px;color:#a8a8a8;">00007FFE89CB0000</div>
<div class="c" style="left:124px;width:294px;color:#c0c0c0;">microsoft.internal.warppal.dll</div>
<svg style="left:421px;top:0px" width="10" height="11" viewBox="0 0 10 11"><rect x="0.9" y="0.6" width="8.3" height="6" rx="0.9" fill="#484c52" stroke="#929292" stroke-width="0.9"/><path d="M2 5 H4 V3 M5 5 H8 M6 5 V3.5" stroke="#56b4a0" stroke-width="1" fill="none"/><rect x="3.4" y="8" width="3.2" height="2.6" fill="#1a1a1a"/><rect x="4.1" y="8.5" width="1.9" height="1.6" fill="#2cb846"/></svg>
<div class="c" style="left:435.5px;width:46px;color:#f0f0f0;">System</div>
<div class="c" style="left:487px;width:310px;color:#f0f0f0;">C:\Windows\System32\Microsoft.Internal.WarpPal.dll</div>
</div>
<div class="row" style="top:191px;">
<div class="c" style="left:4px;width:114px;color:#a8a8a8;">00007FFE8A160000</div>
<div class="c" style="left:124px;width:294px;color:#c0c0c0;">windowscodecs.dll</div>
<svg style="left:421px;top:0px" width="10" height="11" viewBox="0 0 10 11"><rect x="0.9" y="0.6" width="8.3" height="6" rx="0.9" fill="#484c52" stroke="#929292" stroke-width="0.9"/><path d="M2 5 H4 V3 M5 5 H8 M6 5 V3.5" stroke="#56b4a0" stroke-width="1" fill="none"/><rect x="3.4" y="8" width="3.2" height="2.6" fill="#1a1a1a"/><rect x="4.1" y="8.5" width="1.9" height="1.6" fill="#2cb846"/></svg>
<div class="c" style="left:435.5px;width:46px;color:#f0f0f0;">System</div>
<div class="c" style="left:487px;width:310px;color:#f0f0f0;">C:\Windows\System32\WindowsCodecs.dll</div>
</div>
<div class="row" style="top:202px;">
<div class="c" style="left:4px;width:114px;color:#a8a8a8;">00007FFE8A3A0000</div>
<div class="c" style="left:124px;width:294px;color:#c0c0c0;">dwrite.dll</div>
<svg style="left:421px;top:0px" width="10" height="11" viewBox="0 0 10 11"><rect x="0.9" y="0.6" width="8.3" height="6" rx="0.9" fill="#484c52" stroke="#929292" stroke-width="0.9"/><path d="M2 5 H4 V3 M5 5 H8 M6 5 V3.5" stroke="#56b4a0" stroke-width="1" fill="none"/><rect x="3.4" y="8" width="3.2" height="2.6" fill="#1a1a1a"/><rect x="4.1" y="8.5" width="1.9" height="1.6" fill="#2cb846"/></svg>
<div class="c" style="left:435.5px;width:46px;color:#f0f0f0;">System</div>
<div class="c" style="left:487px;width:310px;color:#f0f0f0;">C:\Windows\System32\DWrite.dll</div>
</div>
<div class="row" style="top:213px;">
<div class="c" style="left:4px;width:114px;color:#a8a8a8;">00007FFE8A610000</div>
<div class="c" style="left:124px;width:294px;color:#c0c0c0;">d2d1.dll</div>
<svg style="left:421px;top:0px" width="10" height="11" viewBox="0 0 10 11"><rect x="0.9" y="0.6" width="8.3" height="6" rx="0.9" fill="#484c52" stroke="#929292" stroke-width="0.9"/><path d="M2 5 H4 V3 M5 5 H8 M6 5 V3.5" stroke="#56b4a0" stroke-width="1" fill="none"/><rect x="3.4" y="8" width="3.2" height="2.6" fill="#1a1a1a"/><rect x="4.1" y="8.5" width="1.9" height="1.6" fill="#2cb846"/></svg>
<div class="c" style="left:435.5px;width:46px;color:#f0f0f0;">System</div>
<div class="c" style="left:487px;width:310px;color:#f0f0f0;">C:\Windows\System32\d2d1.dll</div>
</div>
<div class="row" style="top:224px;">
<div class="c" style="left:4px;width:114px;color:#a8a8a8;">00007FFE8AC50000</div>
<div class="c" style="left:124px;width:294px;color:#c0c0c0;">d3d11.dll</div>
<svg style="left:421px;top:0px" width="10" height="11" viewBox="0 0 10 11"><rect x="0.9" y="0.6" width="8.3" height="6" rx="0.9" fill="#484c52" stroke="#929292" stroke-width="0.9"/><path d="M2 5 H4 V3 M5 5 H8 M6 5 V3.5" stroke="#56b4a0" stroke-width="1" fill="none"/><rect x="3.4" y="8" width="3.2" height="2.6" fill="#1a1a1a"/><rect x="4.1" y="8.5" width="1.9" height="1.6" fill="#2cb846"/></svg>
<div class="c" style="left:435.5px;width:46px;color:#f0f0f0;">System</div>
<div class="c" style="left:487px;width:310px;color:#f0f0f0;">C:\Windows\System32\d3d11.dll</div>
</div>
<div class="row" style="top:235px;">
<div class="c" style="left:4px;width:114px;color:#a8a8a8;">00007FFE8AEC0000</div>
<div class="c" style="left:124px;width:294px;color:#c0c0c0;">vcruntime140_1_app.dll</div>
<svg style="left:421px;top:0px" width="10" height="11" viewBox="0 0 10 11"><path d="M2.4 5.5 Q2 0 5 0 Q8 0 7.6 5.5 Z" fill="#8e3c12"/><ellipse cx="5" cy="3.6" rx="1.7" ry="2.3" fill="#efc096"/><path d="M0 10.5 Q0.5 6.6 5 6.6 Q9.5 6.6 10 10.5 Z" fill="#e04656"/><rect x="4.5" y="7" width="1" height="3.5" fill="#f4f4f4"/></svg>
<div class="c" style="left:435.5px;width:46px;color:#f0f0f0;">User</div>
<div class="c" style="left:487px;width:310px;color:#f0f0f0;">C:\Program Files\WindowsApps\Microsoft.VCLibs.140.00.UWPDesktop_14.0.33728.0_x64__8wekyb3d8bbwe\vcruntime140_1_app.dll</div>
</div>
<div class="row" style="top:246px;">
<div class="c" style="left:4px;width:114px;color:#a8a8a8;">00007FFE8AEF0000</div>
<div class="c" style="left:124px;width:294px;color:#c0c0c0;">dcomp.dll</div>
<svg style="left:421px;top:0px" width="10" height="11" viewBox="0 0 10 11"><rect x="0.9" y="0.6" width="8.3" height="6" rx="0.9" fill="#484c52" stroke="#929292" stroke-width="0.9"/><path d="M2 5 H4 V3 M5 5 H8 M6 5 V3.5" stroke="#56b4a0" stroke-width="1" fill="none"/><rect x="3.4" y="8" width="3.2" height="2.6" fill="#1a1a1a"/><rect x="4.1" y="8.5" width="1.9" height="1.6" fill="#2cb846"/></svg>
<div class="c" style="left:435.5px;width:46px;color:#f0f0f0;">System</div>
<div class="c" style="left:487px;width:310px;color:#f0f0f0;">C:\Windows\System32\dcomp.dll</div>
</div>
<div class="row" style="top:257px;">
<div class="c" style="left:4px;width:114px;color:#a8a8a8;">00007FFE8B560000</div>
<div class="c" style="left:124px;width:294px;color:#c0c0c0;">coremessaging.dll</div>
<svg style="left:421px;top:0px" width="10" height="11" viewBox="0 0 10 11"><rect x="0.9" y="0.6" width="8.3" height="6" rx="0.9" fill="#484c52" stroke="#929292" stroke-width="0.9"/><path d="M2 5 H4 V3 M5 5 H8 M6 5 V3.5" stroke="#56b4a0" stroke-width="1" fill="none"/><rect x="3.4" y="8" width="3.2" height="2.6" fill="#1a1a1a"/><rect x="4.1" y="8.5" width="1.9" height="1.6" fill="#2cb846"/></svg>
<div class="c" style="left:435.5px;width:46px;color:#f0f0f0;">System</div>
<div class="c" style="left:487px;width:310px;color:#f0f0f0;">C:\Windows\System32\CoreMessaging.dll</div>
</div>
<div class="row" style="top:268px;">
<div class="c" style="left:4px;width:114px;color:#a8a8a8;">00007FFE8BA30000</div>
<div class="c" style="left:124px;width:294px;color:#c0c0c0;">uxtheme.dll</div>
<svg style="left:421px;top:0px" width="10" height="11" viewBox="0 0 10 11"><rect x="0.9" y="0.6" width="8.3" height="6" rx="0.9" fill="#484c52" stroke="#929292" stroke-width="0.9"/><path d="M2 5 H4 V3 M5 5 H8 M6 5 V3.5" stroke="#56b4a0" stroke-width="1" fill="none"/><rect x="3.4" y="8" width="3.2" height="2.6" fill="#1a1a1a"/><rect x="4.1" y="8.5" width="1.9" height="1.6" fill="#2cb846"/></svg>
<div class="c" style="left:435.5px;width:46px;color:#f0f0f0;">System</div>
<div class="c" style="left:487px;width:310px;color:#f0f0f0;">C:\Windows\System32\uxtheme.dll</div>
</div>
<div class="row" style="top:279px;">
<div class="c" style="left:4px;width:114px;color:#a8a8a8;">00007FFE8BB10000</div>
<div class="c" style="left:124px;width:294px;color:#c0c0c0;">dxcore.dll</div>
<svg style="left:421px;top:0px" width="10" height="11" viewBox="0 0 10 11"><rect x="0.9" y="0.6" width="8.3" height="6" rx="0.9" fill="#484c52" stroke="#929292" stroke-width="0.9"/><path d="M2 5 H4 V3 M5 5 H8 M6 5 V3.5" stroke="#56b4a0" stroke-width="1" fill="none"/><rect x="3.4" y="8" width="3.2" height="2.6" fill="#1a1a1a"/><rect x="4.1" y="8.5" width="1.9" height="1.6" fill="#2cb846"/></svg>
<div class="c" style="left:435.5px;width:46px;color:#f0f0f0;">System</div>
<div class="c" style="left:487px;width:310px;color:#f0f0f0;">C:\Windows\System32\DXCore.dll</div>
</div>
<div class="row" style="top:290px;">
<div class="c" style="left:4px;width:114px;color:#a8a8a8;">00007FFE8BB60000</div>
<div class="c" style="left:124px;width:294px;color:#c0c0c0;">dxgi.dll</div>
<svg style="left:421px;top:0px" width="10" height="11" viewBox="0 0 10 11"><rect x="0.9" y="0.6" width="8.3" height="6" rx="0.9" fill="#484c52" stroke="#929292" stroke-width="0.9"/><path d="M2 5 H4 V3 M5 5 H8 M6 5 V3.5" stroke="#56b4a0" stroke-width="1" fill="none"/><rect x="3.4" y="8" width="3.2" height="2.6" fill="#1a1a1a"/><rect x="4.1" y="8.5" width="1.9" height="1.6" fill="#2cb846"/></svg>
<div class="c" style="left:435.5px;width:46px;color:#f0f0f0;">System</div>
<div class="c" style="left:487px;width:310px;color:#f0f0f0;">C:\Windows\System32\dxgi.dll</div>
</div>
<div class="row" style="top:301px;">
<div class="c" style="left:4px;width:114px;color:#a8a8a8;">00007FFE8BF10000</div>
<div class="c" style="left:124px;width:294px;color:#c0c0c0;">rmclient.dll</div>
<svg style="left:421px;top:0px" width="10" height="11" viewBox="0 0 10 11"><rect x="0.9" y="0.6" width="8.3" height="6" rx="0.9" fill="#484c52" stroke="#929292" stroke-width="0.9"/><path d="M2 5 H4 V3 M5 5 H8 M6 5 V3.5" stroke="#56b4a0" stroke-width="1" fill="none"/><rect x="3.4" y="8" width="3.2" height="2.6" fill="#1a1a1a"/><rect x="4.1" y="8.5" width="1.9" height="1.6" fill="#2cb846"/></svg>
<div class="c" style="left:435.5px;width:46px;color:#f0f0f0;">System</div>
<div class="c" style="left:487px;width:310px;color:#f0f0f0;">C:\Windows\System32\rmclient.dll</div>
</div>
<div class="row" style="top:312px;">
<div class="c" style="left:4px;width:114px;color:#a8a8a8;">00007FFE8C5E0000</div>
<div class="c" style="left:124px;width:294px;color:#c0c0c0;">profext.dll</div>
<svg style="left:421px;top:0px" width="10" height="11" viewBox="0 0 10 11"><rect x="0.9" y="0.6" width="8.3" height="6" rx="0.9" fill="#484c52" stroke="#929292" stroke-width="0.9"/><path d="M2 5 H4 V3 M5 5 H8 M6 5 V3.5" stroke="#56b4a0" stroke-width="1" fill="none"/><rect x="3.4" y="8" width="3.2" height="2.6" fill="#1a1a1a"/><rect x="4.1" y="8.5" width="1.9" height="1.6" fill="#2cb846"/></svg>
<div class="c" style="left:435.5px;width:46px;color:#f0f0f0;">System</div>
<div class="c" style="left:487px;width:310px;color:#f0f0f0;">C:\Windows\System32\profext.dll</div>
</div>
<div class="row" style="top:323px;">
<div class="c" style="left:4px;width:114px;color:#a8a8a8;">00007FFE8C7E0000</div>
<div class="c" style="left:124px;width:294px;color:#c0c0c0;">netutils.dll</div>
<svg style="left:421px;top:0px" width="10" height="11" viewBox="0 0 10 11"><rect x="0.9" y="0.6" width="8.3" height="6" rx="0.9" fill="#484c52" stroke="#929292" stroke-width="0.9"/><path d="M2 5 H4 V3 M5 5 H8 M6 5 V3.5" stroke="#56b4a0" stroke-width="1" fill="none"/><rect x="3.4" y="8" width="3.2" height="2.6" fill="#1a1a1a"/><rect x="4.1" y="8.5" width="1.9" height="1.6" fill="#2cb846"/></svg>
<div class="c" style="left:435.5px;width:46px;color:#f0f0f0;">System</div>
<div class="c" style="left:487px;width:310px;color:#f0f0f0;">C:\Windows\System32\netutils.dll</div>
</div>
<div class="row" style="top:334px;">
<div class="c" style="left:4px;width:114px;color:#a8a8a8;">00007FFE8CC80000</div>
<div class="c" style="left:124px;width:294px;color:#c0c0c0;">kernel.appcore.dll</div>
<svg style="left:421px;top:0px" width="10" height="11" viewBox="0 0 10 11"><rect x="0.9" y="0.6" width="8.3" height="6" rx="0.9" fill="#484c52" stroke="#929292" stroke-width="0.9"/><path d="M2 5 H4 V3 M5 5 H8 M6 5 V3.5" stroke="#56b4a0" stroke-width="1" fill="none"/><rect x="3.4" y="8" width="3.2" height="2.6" fill="#1a1a1a"/><rect x="4.1" y="8.5" width="1.9" height="1.6" fill="#2cb846"/></svg>
<div class="c" style="left:435.5px;width:46px;color:#f0f0f0;">System</div>
<div class="c" style="left:487px;width:310px;color:#f0f0f0;">C:\Windows\System32\kernel.appcore.dll</div>
</div>
<div class="row" style="top:345px;">
<div class="c" style="left:4px;width:114px;color:#a8a8a8;">00007FFE8D280000</div>
<div class="c" style="left:124px;width:294px;color:#c0c0c0;">userenv.dll</div>
<svg style="left:421px;top:0px" width="10" height="11" viewBox="0 0 10 11"><rect x="0.9" y="0.6" width="8.3" height="6" rx="0.9" fill="#484c52" stroke="#929292" stroke-width="0.9"/><path d="M2 5 H4 V3 M5 5 H8 M6 5 V3.5" stroke="#56b4a0" stroke-width="1" fill="none"/><rect x="3.4" y="8" width="3.2" height="2.6" fill="#1a1a1a"/><rect x="4.1" y="8.5" width="1.9" height="1.6" fill="#2cb846"/></svg>
<div class="c" style="left:435.5px;width:46px;color:#f0f0f0;">System</div>
<div class="c" style="left:487px;width:310px;color:#f0f0f0;">C:\Windows\System32\userenv.dll</div>
</div>
<div class="row" style="top:356px;">
<div class="c" style="left:4px;width:114px;color:#a8a8a8;">00007FFE8D420000</div>
<div class="c" style="left:124px;width:294px;color:#c0c0c0;">cryptbase.dll</div>
<svg style="left:421px;top:0px" width="10" height="11" viewBox="0 0 10 11"><rect x="0.9" y="0.6" width="8.3" height="6" rx="0.9" fill="#484c52" stroke="#929292" stroke-width="0.9"/><path d="M2 5 H4 V3 M5 5 H8 M6 5 V3.5" stroke="#56b4a0" stroke-width="1" fill="none"/><rect x="3.4" y="8" width="3.2" height="2.6" fill="#1a1a1a"/><rect x="4.1" y="8.5" width="1.9" height="1.6" fill="#2cb846"/></svg>
<div class="c" style="left:435.5px;width:46px;color:#f0f0f0;">System</div>
<div class="c" style="left:487px;width:310px;color:#f0f0f0;">C:\Windows\System32\cryptbase.dll</div>
</div>
<div class="row" style="top:367px;">
<div class="c" style="left:4px;width:114px;color:#a8a8a8;">00007FFE8DA80000</div>
<div class="c" style="left:124px;width:294px;color:#c0c0c0;">cfgmgr32.dll</div>
<svg style="left:421px;top:0px" width="10" height="11" viewBox="0 0 10 11"><rect x="0.9" y="0.6" width="8.3" height="6" rx="0.9" fill="#484c52" stroke="#929292" stroke-width="0.9"/><path d="M2 5 H4 V3 M5 5 H8 M6 5 V3.5" stroke="#56b4a0" stroke-width="1" fill="none"/><rect x="3.4" y="8" width="3.2" height="2.6" fill="#1a1a1a"/><rect x="4.1" y="8.5" width="1.9" height="1.6" fill="#2cb846"/></svg>
<div class="c" style="left:435.5px;width:46px;color:#f0f0f0;">System</div>
<div class="c" style="left:487px;width:310px;color:#f0f0f0;">C:\Windows\System32\cfgmgr32.dll</div>
</div>
<div class="row" style="top:378px;">
<div class="c" style="left:4px;width:114px;color:#a8a8a8;">00007FFE8DB10000</div>
<div class="c" style="left:124px;width:294px;color:#c0c0c0;">dpapi.dll</div>
<svg style="left:421px;top:0px" width="10" height="11" viewBox="0 0 10 11"><rect x="0.9" y="0.6" width="8.3" height="6" rx="0.9" fill="#484c52" stroke="#929292" stroke-width="0.9"/><path d="M2 5 H4 V3 M5 5 H8 M6 5 V3.5" stroke="#56b4a0" stroke-width="1" fill="none"/><rect x="3.4" y="8" width="3.2" height="2.6" fill="#1a1a1a"/><rect x="4.1" y="8.5" width="1.9" height="1.6" fill="#2cb846"/></svg>
<div class="c" style="left:435.5px;width:46px;color:#f0f0f0;">System</div>
<div class="c" style="left:487px;width:310px;color:#f0f0f0;">C:\Windows\System32\dpapi.dll</div>
</div>
<div class="row" style="top:389px;">
<div class="c" style="left:4px;width:114px;color:#a8a8a8;">00007FFE8DD80000</div>
<div class="c" style="left:124px;width:294px;color:#c0c0c0;">umpdc.dll</div>
<svg style="left:421px;top:0px" width="10" height="11" viewBox="0 0 10 11"><rect x="0.9" y="0.6" width="8.3" height="6" rx="0.9" fill="#484c52" stroke="#929292" stroke-width="0.9"/><path d="M2 5 H4 V3 M5 5 H8 M6 5 V3.5" stroke="#56b4a0" stroke-width="1" fill="none"/><rect x="3.4" y="8" width="3.2" height="2.6" fill="#1a1a1a"/><rect x="4.1" y="8.5" width="1.9" height="1.6" fill="#2cb846"/></svg>
<div class="c" style="left:435.5px;width:46px;color:#f0f0f0;">System</div>
<div class="c" style="left:487px;width:310px;color:#f0f0f0;">C:\Windows\System32\umpdc.dll</div>
</div>
<div class="row" style="top:400px;">
<div class="c" style="left:4px;width:114px;color:#a8a8a8;">00007FFE8DDA0000</div>
<div class="c" style="left:124px;width:294px;color:#c0c0c0;">powrprof.dll</div>
<svg style="left:421px;top:0px" width="10" height="11" viewBox="0 0 10 11"><rect x="0.9" y="0.6" width="8.3" height="6" rx="0.9" fill="#484c52" stroke="#929292" stroke-width="0.9"/><path d="M2 5 H4 V3 M5 5 H8 M6 5 V3.5" stroke="#56b4a0" stroke-width="1" fill="none"/><rect x="3.4" y="8" width="3.2" height="2.6" fill="#1a1a1a"/><rect x="4.1" y="8.5" width="1.9" height="1.6" fill="#2cb846"/></svg>
<div class="c" style="left:435.5px;width:46px;color:#f0f0f0;">System</div>
<div class="c" style="left:487px;width:310px;color:#f0f0f0;">C:\Windows\System32\powrprof.dll</div>
</div>
<div class="row" style="top:411px;">
<div class="c" style="left:4px;width:114px;color:#a8a8a8;">00007FFE8DE10000</div>
<div class="c" style="left:124px;width:294px;color:#c0c0c0;">bcrypt.dll</div>
<svg style="left:421px;top:0px" width="10" height="11" viewBox="0 0 10 11"><rect x="0.9" y="0.6" width="8.3" height="6" rx="0.9" fill="#484c52" stroke="#929292" stroke-width="0.9"/><path d="M2 5 H4 V3 M5 5 H8 M6 5 V3.5" stroke="#56b4a0" stroke-width="1" fill="none"/><rect x="3.4" y="8" width="3.2" height="2.6" fill="#1a1a1a"/><rect x="4.1" y="8.5" width="1.9" height="1.6" fill="#2cb846"/></svg>
<div class="c" style="left:435.5px;width:46px;color:#f0f0f0;">System</div>
<div class="c" style="left:487px;width:310px;color:#f0f0f0;">C:\Windows\System32\bcrypt.dll</div>
</div>
<div class="row" style="top:422px;">
<div class="c" style="left:4px;width:114px;color:#a8a8a8;">00007FFE8DE40000</div>
<div class="c" style="left:124px;width:294px;color:#c0c0c0;">profapi.dll</div>
<svg style="left:421px;top:0px" width="10" height="11" viewBox="0 0 10 11"><rect x="0.9" y="0.6" width="8.3" height="6" rx="0.9" fill="#484c52" stroke="#929292" stroke-width="0.9"/><path d="M2 5 H4 V3 M5 5 H8 M6 5 V3.5" stroke="#56b4a0" stroke-width="1" fill="none"/><rect x="3.4" y="8" width="3.2" height="2.6" fill="#1a1a1a"/><rect x="4.1" y="8.5" width="1.9" height="1.6" fill="#2cb846"/></svg>
<div class="c" style="left:435.5px;width:46px;color:#f0f0f0;">System</div>
<div class="c" style="left:487px;width:310px;color:#f0f0f0;">C:\Windows\System32\profapi.dll</div>
</div>
<div class="row" style="top:433px;">
<div class="c" style="left:4px;width:114px;color:#a8a8a8;">00007FFE8DF20000</div>
<div class="c" style="left:124px;width:294px;color:#c0c0c0;">win32u.dll</div>
<svg style="left:421px;top:0px" width="10" height="11" viewBox="0 0 10 11"><rect x="0.9" y="0.6" width="8.3" height="6" rx="0.9" fill="#484c52" stroke="#929292" stroke-width="0.9"/><path d="M2 5 H4 V3 M5 5 H8 M6 5 V3.5" stroke="#56b4a0" stroke-width="1" fill="none"/><rect x="3.4" y="8" width="3.2" height="2.6" fill="#1a1a1a"/><rect x="4.1" y="8.5" width="1.9" height="1.6" fill="#2cb846"/></svg>
<div class="c" style="left:435.5px;width:46px;color:#f0f0f0;">System</div>
<div class="c" style="left:487px;width:310px;color:#f0f0f0;">C:\Windows\System32\win32u.dll</div>
</div>
<div class="row" style="top:444px;">
<div class="c" style="left:4px;width:114px;color:#a8a8a8;">00007FFE8DF50000</div>
<div class="c" style="left:124px;width:294px;color:#c0c0c0;">windows.storage.dll</div>
<svg style="left:421px;top:0px" width="10" height="11" viewBox="0 0 10 11"><rect x="0.9" y="0.6" width="8.3" height="6" rx="0.9" fill="#484c52" stroke="#929292" stroke-width="0.9"/><path d="M2 5 H4 V3 M5 5 H8 M6 5 V3.5" stroke="#56b4a0" stroke-width="1" fill="none"/><rect x="3.4" y="8" width="3.2" height="2.6" fill="#1a1a1a"/><rect x="4.1" y="8.5" width="1.9" height="1.6" fill="#2cb846"/></svg>
<div class="c" style="left:435.5px;width:46px;color:#f0f0f0;">System</div>
<div class="c" style="left:487px;width:310px;color:#f0f0f0;">C:\Windows\System32\windows.storage.dll</div>
</div>
<div class="row" style="top:455px;">
<div class="c" style="left:4px;width:114px;color:#a8a8a8;">00007FFE8E7C0000</div>
<div class="c" style="left:124px;width:294px;color:#c0c0c0;">wintypes.dll</div>
<svg style="left:421px;top:0px" width="10" height="11" viewBox="0 0 10 11"><rect x="0.9" y="0.6" width="8.3" height="6" rx="0.9" fill="#484c52" stroke="#929292" stroke-width="0.9"/><path d="M2 5 H4 V3 M5 5 H8 M6 5 V3.5" stroke="#56b4a0" stroke-width="1" fill="none"/><rect x="3.4" y="8" width="3.2" height="2.6" fill="#1a1a1a"/><rect x="4.1" y="8.5" width="1.9" height="1.6" fill="#2cb846"/></svg>
<div class="c" style="left:435.5px;width:46px;color:#f0f0f0;">System</div>
<div class="c" style="left:487px;width:310px;color:#f0f0f0;">C:\Windows\System32\WinTypes.dll</div>
</div>
<div class="row" style="top:466px;">
<div class="c" style="left:4px;width:114px;color:#a8a8a8;">00007FFE8E930000</div>
<div class="c" style="left:124px;width:294px;color:#c0c0c0;">bcryptprimitives.dll</div>
<svg style="left:421px;top:0px" width="10" height="11" viewBox="0 0 10 11"><rect x="0.9" y="0.6" width="8.3" height="6" rx="0.9" fill="#484c52" stroke="#929292" stroke-width="0.9"/><path d="M2 5 H4 V3 M5 5 H8 M6 5 V3.5" stroke="#56b4a0" stroke-width="1" fill="none"/><rect x="3.4" y="8" width="3.2" height="2.6" fill="#1a1a1a"/><rect x="4.1" y="8.5" width="1.9" height="1.6" fill="#2cb846"/></svg>
<div class="c" style="left:435.5px;width:46px;color:#f0f0f0;">System</div>
<div class="c" style="left:487px;width:310px;color:#f0f0f0;">C:\Windows\System32\bcryptprimitives.dll</div>
</div>
<div class="row" style="top:477px;">
<div class="c" style="left:4px;width:114px;color:#a8a8a8;">00007FFE8E9E0000</div>
<div class="c" style="left:124px;width:294px;color:#c0c0c0;">ucrtbase.dll</div>
<svg style="left:421px;top:0px" width="10" height="11" viewBox="0 0 10 11"><rect x="0.9" y="0.6" width="8.3" height="6" rx="0.9" fill="#484c52" stroke="#929292" stroke-width="0.9"/><path d="M2 5 H4 V3 M5 5 H8 M6 5 V3.5" stroke="#56b4a0" stroke-width="1" fill="none"/><rect x="3.4" y="8" width="3.2" height="2.6" fill="#1a1a1a"/><rect x="4.1" y="8.5" width="1.9" height="1.6" fill="#2cb846"/></svg>
<div class="c" style="left:435.5px;width:46px;color:#f0f0f0;">System</div>
<div class="c" style="left:487px;width:310px;color:#f0f0f0;">C:\Windows\System32\ucrtbase.dll</div>
</div>
<div class="row" style="top:488px;">
<div class="c" style="left:4px;width:114px;color:#a8a8a8;">00007FFE8EBF0000</div>
<div class="c" style="left:124px;width:294px;color:#c0c0c0;">gdi32full.dll</div>
<svg style="left:421px;top:0px" width="10" height="11" viewBox="0 0 10 11"><rect x="0.9" y="0.6" width="8.3" height="6" rx="0.9" fill="#484c52" stroke="#929292" stroke-width="0.9"/><path d="M2 5 H4 V3 M5 5 H8 M6 5 V3.5" stroke="#56b4a0" stroke-width="1" fill="none"/><rect x="3.4" y="8" width="3.2" height="2.6" fill="#1a1a1a"/><rect x="4.1" y="8.5" width="1.9" height="1.6" fill="#2cb846"/></svg>
<div class="c" style="left:435.5px;width:46px;color:#f0f0f0;">System</div>
<div class="c" style="left:487px;width:310px;color:#f0f0f0;">C:\Windows\System32\gdi32full.dll</div>
</div>
<div class="row" style="top:499px;">
<div class="c" style="left:4px;width:114px;color:#a8a8a8;">00007FFE8ED20000</div>
<div class="c" style="left:124px;width:294px;color:#c0c0c0;">msvcp_win.dll</div>
<svg style="left:421px;top:0px" width="10" height="11" viewBox="0 0 10 11"><rect x="0.9" y="0.6" width="8.3" height="6" rx="0.9" fill="#484c52" stroke="#929292" stroke-width="0.9"/><path d="M2 5 H4 V3 M5 5 H8 M6 5 V3.5" stroke="#56b4a0" stroke-width="1" fill="none"/><rect x="3.4" y="8" width="3.2" height="2.6" fill="#1a1a1a"/><rect x="4.1" y="8.5" width="1.9" height="1.6" fill="#2cb846"/></svg>
<div class="c" style="left:435.5px;width:46px;color:#f0f0f0;">System</div>
<div class="c" style="left:487px;width:310px;color:#f0f0f0;">C:\Windows\System32\msvcp_win.dll</div>
</div>
<div class="row" style="top:510px;">
<div class="c" style="left:4px;width:114px;color:#a8a8a8;">00007FFE8EDD0000</div>
<div class="c" style="left:124px;width:294px;color:#c0c0c0;">kernelbase.dll</div>
<svg style="left:421px;top:0px" width="10" height="11" viewBox="0 0 10 11"><rect x="0.9" y="0.6" width="8.3" height="6" rx="0.9" fill="#484c52" stroke="#929292" stroke-width="0.9"/><path d="M2 5 H4 V3 M5 5 H8 M6 5 V3.5" stroke="#56b4a0" stroke-width="1" fill="none"/><rect x="3.4" y="8" width="3.2" height="2.6" fill="#1a1a1a"/><rect x="4.1" y="8.5" width="1.9" height="1.6" fill="#2cb846"/></svg>
<div class="c" style="left:435.5px;width:46px;color:#f0f0f0;">System</div>
<div class="c" style="left:487px;width:310px;color:#f0f0f0;">C:\Windows\System32\KernelBase.dll</div>
</div>
<div class="row" style="top:521px;">
<div class="c" style="left:4px;width:114px;color:#a8a8a8;">00007FFE8F1D0000</div>
<div class="c" style="left:124px;width:294px;color:#c0c0c0;">crypt32.dll</div>
<svg style="left:421px;top:0px" width="10" height="11" viewBox="0 0 10 11"><rect x="0.9" y="0.6" width="8.3" height="6" rx="0.9" fill="#484c52" stroke="#929292" stroke-width="0.9"/><path d="M2 5 H4 V3 M5 5 H8 M6 5 V3.5" stroke="#56b4a0" stroke-width="1" fill="none"/><rect x="3.4" y="8" width="3.2" height="2.6" fill="#1a1a1a"/><rect x="4.1" y="8.5" width="1.9" height="1.6" fill="#2cb846"/></svg>
<div class="c" style="left:435.5px;width:46px;color:#f0f0f0;">System</div>
<div class="c" style="left:487px;width:310px;color:#f0f0f0;">C:\Windows\System32\crypt32.dll</div>
</div>
<div class="row" style="top:532px;">
<div class="c" style="left:4px;width:114px;color:#a8a8a8;">00007FFE8F3F0000</div>
<div class="c" style="left:124px;width:294px;color:#c0c0c0;">advapi32.dll</div>
<svg style="left:421px;top:0px" width="10" height="11" viewBox="0 0 10 11"><rect x="0.9" y="0.6" width="8.3" height="6" rx="0.9" fill="#484c52" stroke="#929292" stroke-width="0.9"/><path d="M2 5 H4 V3 M5 5 H8 M6 5 V3.5" stroke="#56b4a0" stroke-width="1" fill="none"/><rect x="3.4" y="8" width="3.2" height="2.6" fill="#1a1a1a"/><rect x="4.1" y="8.5" width="1.9" height="1.6" fill="#2cb846"/></svg>
<div class="c" style="left:435.5px;width:46px;color:#f0f0f0;">System</div>
<div class="c" style="left:487px;width:310px;color:#f0f0f0;">C:\Windows\System32\advapi32.dll</div>
</div>
<div class="row" style="top:543px;">
<div class="c" style="left:4px;width:114px;color:#a8a8a8;">00007FFE8F4E0000</div>
<div class="c" style="left:124px;width:294px;color:#c0c0c0;">sechost.dll</div>
<svg style="left:421px;top:0px" width="10" height="11" viewBox="0 0 10 11"><rect x="0.9" y="0.6" width="8.3" height="6" rx="0.9" fill="#484c52" stroke="#929292" stroke-width="0.9"/><path d="M2 5 H4 V3 M5 5 H8 M6 5 V3.5" stroke="#56b4a0" stroke-width="1" fill="none"/><rect x="3.4" y="8" width="3.2" height="2.6" fill="#1a1a1a"/><rect x="4.1" y="8.5" width="1.9" height="1.6" fill="#2cb846"/></svg>
<div class="c" style="left:435.5px;width:46px;color:#f0f0f0;">System</div>
<div class="c" style="left:487px;width:310px;color:#f0f0f0;">C:\Windows\System32\sechost.dll</div>
</div>
<div class="row" style="top:554px;">
<div class="c" style="left:4px;width:114px;color:#a8a8a8;">00007FFE8F5F0000</div>
<div class="c" style="left:124px;width:294px;color:#c0c0c0;">imm32.dll</div>
<svg style="left:421px;top:0px" width="10" height="11" viewBox="0 0 10 11"><rect x="0.9" y="0.6" width="8.3" height="6" rx="0.9" fill="#484c52" stroke="#929292" stroke-width="0.9"/><path d="M2 5 H4 V3 M5 5 H8 M6 5 V3.5" stroke="#56b4a0" stroke-width="1" fill="none"/><rect x="3.4" y="8" width="3.2" height="2.6" fill="#1a1a1a"/><rect x="4.1" y="8.5" width="1.9" height="1.6" fill="#2cb846"/></svg>
<div class="c" style="left:435.5px;width:46px;color:#f0f0f0;">System</div>
<div class="c" style="left:487px;width:310px;color:#f0f0f0;">C:\Windows\System32\imm32.dll</div>
</div>
<div class="row" style="top:565px;">
<div class="c" style="left:4px;width:114px;color:#a8a8a8;">00007FFE8FE10000</div>
<div class="c" style="left:124px;width:294px;color:#c0c0c0;">shell32.dll</div>
<svg style="left:421px;top:0px" width="10" height="11" viewBox="0 0 10 11"><rect x="0.9" y="0.6" width="8.3" height="6" rx="0.9" fill="#484c52" stroke="#929292" stroke-width="0.9"/><path d="M2 5 H4 V3 M5 5 H8 M6 5 V3.5" stroke="#56b4a0" stroke-width="1" fill="none"/><rect x="3.4" y="8" width="3.2" height="2.6" fill="#1a1a1a"/><rect x="4.1" y="8.5" width="1.9" height="1.6" fill="#2cb846"/></svg>
<div class="c" style="left:435.5px;width:46px;color:#f0f0f0;">System</div>
<div class="c" style="left:487px;width:310px;color:#f0f0f0;">C:\Windows\System32\shell32.dll</div>
</div>
<div class="row" style="top:576px;">
<div class="c" style="left:4px;width:114px;color:#a8a8a8;">00007FFE90570000</div>
<div class="c" style="left:124px;width:294px;color:#c0c0c0;">normaliz.dll</div>
<svg style="left:421px;top:0px" width="10" height="11" viewBox="0 0 10 11"><rect x="0.9" y="0.6" width="8.3" height="6" rx="0.9" fill="#484c52" stroke="#929292" stroke-width="0.9"/><path d="M2 5 H4 V3 M5 5 H8 M6 5 V3.5" stroke="#56b4a0" stroke-width="1" fill="none"/><rect x="3.4" y="8" width="3.2" height="2.6" fill="#1a1a1a"/><rect x="4.1" y="8.5" width="1.9" height="1.6" fill="#2cb846"/></svg>
<div class="c" style="left:435.5px;width:46px;color:#f0f0f0;">System</div>
<div class="c" style="left:487px;width:310px;color:#f0f0f0;">C:\Windows\System32\normaliz.dll</div>
</div>
<div class="row" style="top:587px;">
<div class="c" style="left:4px;width:114px;color:#a8a8a8;">00007FFE90580000</div>
<div class="c" style="left:124px;width:294px;color:#c0c0c0;">kernel32.dll</div>
<svg style="left:421px;top:0px" width="10" height="11" viewBox="0 0 10 11"><rect x="0.9" y="0.6" width="8.3" height="6" rx="0.9" fill="#484c52" stroke="#929292" stroke-width="0.9"/><path d="M2 5 H4 V3 M5 5 H8 M6 5 V3.5" stroke="#56b4a0" stroke-width="1" fill="none"/><rect x="3.4" y="8" width="3.2" height="2.6" fill="#1a1a1a"/><rect x="4.1" y="8.5" width="1.9" height="1.6" fill="#2cb846"/></svg>
<div class="c" style="left:435.5px;width:46px;color:#f0f0f0;">System</div>
<div class="c" style="left:487px;width:310px;color:#f0f0f0;">C:\Windows\System32\kernel32.dll</div>
</div>
<div class="row" style="top:598px;">
<div class="c" style="left:4px;width:114px;color:#a8a8a8;">00007FFE90650000</div>
<div class="c" style="left:124px;width:294px;color:#c0c0c0;">msvcrt.dll</div>
<svg style="left:421px;top:0px" width="10" height="11" viewBox="0 0 10 11"><rect x="0.9" y="0.6" width="8.3" height="6" rx="0.9" fill="#484c52" stroke="#929292" stroke-width="0.9"/><path d="M2 5 H4 V3 M5 5 H8 M6 5 V3.5" stroke="#56b4a0" stroke-width="1" fill="none"/><rect x="3.4" y="8" width="3.2" height="2.6" fill="#1a1a1a"/><rect x="4.1" y="8.5" width="1.9" height="1.6" fill="#2cb846"/></svg>
<div class="c" style="left:435.5px;width:46px;color:#f0f0f0;">System</div>
<div class="c" style="left:487px;width:310px;color:#f0f0f0;">C:\Windows\System32\msvcrt.dll</div>
</div>
<div class="row" style="top:609px;">
<div class="c" style="left:4px;width:114px;color:#a8a8a8;">00007FFE90700000</div>
<div class="c" style="left:124px;width:294px;color:#c0c0c0;">oleaut32.dll</div>
<svg style="left:421px;top:0px" width="10" height="11" viewBox="0 0 10 11"><rect x="0.9" y="0.6" width="8.3" height="6" rx="0.9" fill="#484c52" stroke="#929292" stroke-width="0.9"/><path d="M2 5 H4 V3 M5 5 H8 M6 5 V3.5" stroke="#56b4a0" stroke-width="1" fill="none"/><rect x="3.4" y="8" width="3.2" height="2.6" fill="#1a1a1a"/><rect x="4.1" y="8.5" width="1.9" height="1.6" fill="#2cb846"/></svg>
<div class="c" style="left:435.5px;width:46px;color:#f0f0f0;">System</div>
<div class="c" style="left:487px;width:310px;color:#f0f0f0;">C:\Windows\System32\oleaut32.dll</div>
</div>
<div class="row" style="top:620px;">
<div class="c" style="left:4px;width:114px;color:#a8a8a8;">00007FFE907E0000</div>
<div class="c" style="left:124px;width:294px;color:#c0c0c0;">msctf.dll</div>
<svg style="left:421px;top:0px" width="10" height="11" viewBox="0 0 10 11"><rect x="0.9" y="0.6" width="8.3" height="6" rx="0.9" fill="#484c52" stroke="#929292" stroke-width="0.9"/><path d="M2 5 H4 V3 M5 5 H8 M6 5 V3.5" stroke="#56b4a0" stroke-width="1" fill="none"/><rect x="3.4" y="8" width="3.2" height="2.6" fill="#1a1a1a"/><rect x="4.1" y="8.5" width="1.9" height="1.6" fill="#2cb846"/></svg>
<div class="c" style="left:435.5px;width:46px;color:#f0f0f0;">System</div>
<div class="c" style="left:487px;width:310px;color:#f0f0f0;">C:\Windows\System32\msctf.dll</div>
</div>
<div class="row" style="top:631px;">
<div class="c" style="left:4px;width:114px;color:#a8a8a8;">00007FFE90A10000</div>
<div class="c" style="left:124px;width:294px;color:#c0c0c0;">ole32.dll</div>
<svg style="left:421px;top:0px" width="10" height="11" viewBox="0 0 10 11"><rect x="0.9" y="0.6" width="8.3" height="6" rx="0.9" fill="#484c52" stroke="#929292" stroke-width="0.9"/><path d="M2 5 H4 V3 M5 5 H8 M6 5 V3.5" stroke="#56b4a0" stroke-width="1" fill="none"/><rect x="3.4" y="8" width="3.2" height="2.6" fill="#1a1a1a"/><rect x="4.1" y="8.5" width="1.9" height="1.6" fill="#2cb846"/></svg>
<div class="c" style="left:435.5px;width:46px;color:#f0f0f0;">System</div>
<div class="c" style="left:487px;width:310px;color:#f0f0f0;">C:\Windows\System32\ole32.dll</div>
</div>
<div class="row" style="top:642px;">
<div class="c" style="left:4px;width:114px;color:#a8a8a8;">00007FFE90BB0000</div>
<div class="c" style="left:124px;width:294px;color:#c0c0c0;">rpcrt4.dll</div>
<svg style="left:421px;top:0px" width="10" height="11" viewBox="0 0 10 11"><rect x="0.9" y="0.6" width="8.3" height="6" rx="0.9" fill="#484c52" stroke="#929292" stroke-width="0.9"/><path d="M2 5 H4 V3 M5 5 H8 M6 5 V3.5" stroke="#56b4a0" stroke-width="1" fill="none"/><rect x="3.4" y="8" width="3.2" height="2.6" fill="#1a1a1a"/><rect x="4.1" y="8.5" width="1.9" height="1.6" fill="#2cb846"/></svg>
<div class="c" style="left:435.5px;width:46px;color:#f0f0f0;">System</div>
<div class="c" style="left:487px;width:310px;color:#f0f0f0;">C:\Windows\System32\rpcrt4.dll</div>
</div>
<div class="row" style="top:653px;">
<div class="c" style="left:4px;width:114px;color:#a8a8a8;">00007FFE90CE0000</div>
<div class="c" style="left:124px;width:294px;color:#c0c0c0;">user32.dll</div>
<svg style="left:421px;top:0px" width="10" height="11" viewBox="0 0 10 11"><rect x="0.9" y="0.6" width="8.3" height="6" rx="0.9" fill="#484c52" stroke="#929292" stroke-width="0.9"/><path d="M2 5 H4 V3 M5 5 H8 M6 5 V3.5" stroke="#56b4a0" stroke-width="1" fill="none"/><rect x="3.4" y="8" width="3.2" height="2.6" fill="#1a1a1a"/><rect x="4.1" y="8.5" width="1.9" height="1.6" fill="#2cb846"/></svg>
<div class="c" style="left:435.5px;width:46px;color:#f0f0f0;">System</div>
<div class="c" style="left:487px;width:310px;color:#f0f0f0;">C:\Windows\System32\user32.dll</div>
</div>
<div class="row" style="top:664px;">
<div class="c" style="left:4px;width:114px;color:#a8a8a8;">00007FFE91110000</div>
<div class="c" style="left:124px;width:294px;color:#c0c0c0;">combase.dll</div>
<svg style="left:421px;top:0px" width="10" height="11" viewBox="0 0 10 11"><rect x="0.9" y="0.6" width="8.3" height="6" rx="0.9" fill="#484c52" stroke="#929292" stroke-width="0.9"/><path d="M2 5 H4 V3 M5 5 H8 M6 5 V3.5" stroke="#56b4a0" stroke-width="1" fill="none"/><rect x="3.4" y="8" width="3.2" height="2.6" fill="#1a1a1a"/><rect x="4.1" y="8.5" width="1.9" height="1.6" fill="#2cb846"/></svg>
<div class="c" style="left:435.5px;width:46px;color:#f0f0f0;">System</div>
<div class="c" style="left:487px;width:310px;color:#f0f0f0;">C:\Windows\System32\combase.dll</div>
</div>
<div class="row" style="top:675px;">
<div class="c" style="left:4px;width:114px;color:#a8a8a8;">00007FFE914B0000</div>
<div class="c" style="left:124px;width:294px;color:#c0c0c0;">gdi32.dll</div>
<svg style="left:421px;top:0px" width="10" height="11" viewBox="0 0 10 11"><rect x="0.9" y="0.6" width="8.3" height="6" rx="0.9" fill="#484c52" stroke="#929292" stroke-width="0.9"/><path d="M2 5 H4 V3 M5 5 H8 M6 5 V3.5" stroke="#56b4a0" stroke-width="1" fill="none"/><rect x="3.4" y="8" width="3.2" height="2.6" fill="#1a1a1a"/><rect x="4.1" y="8.5" width="1.9" height="1.6" fill="#2cb846"/></svg>
<div class="c" style="left:435.5px;width:46px;color:#f0f0f0;">System</div>
<div class="c" style="left:487px;width:310px;color:#f0f0f0;">C:\Windows\System32\gdi32.dll</div>
</div>
<div class="row" style="top:686px;">
<div class="c" style="left:4px;width:114px;color:#a8a8a8;">00007FFE914E0000</div>
<div class="c" style="left:124px;width:294px;color:#c0c0c0;">shcore.dll</div>
<svg style="left:421px;top:0px" width="10" height="11" viewBox="0 0 10 11"><rect x="0.9" y="0.6" width="8.3" height="6" rx="0.9" fill="#484c52" stroke="#929292" stroke-width="0.9"/><path d="M2 5 H4 V3 M5 5 H8 M6 5 V3.5" stroke="#56b4a0" stroke-width="1" fill="none"/><rect x="3.4" y="8" width="3.2" height="2.6" fill="#1a1a1a"/><rect x="4.1" y="8.5" width="1.9" height="1.6" fill="#2cb846"/></svg>
<div class="c" style="left:435.5px;width:46px;color:#f0f0f0;">System</div>
<div class="c" style="left:487px;width:310px;color:#f0f0f0;">C:\Windows\System32\SHCore.dll</div>
</div>
<div class="row" style="top:697px;background:#414141;">
<div class="c" style="left:4px;width:114px;color:#ffffff;">00007FFE91640000</div>
<div class="c" style="left:124px;width:294px;color:#b0b0b0;">ntdll.dll</div>
<svg style="left:421px;top:0px" width="10" height="11" viewBox="0 0 10 11"><rect x="0.9" y="0.6" width="8.3" height="6" rx="0.9" fill="#484c52" stroke="#929292" stroke-width="0.9"/><path d="M2 5 H4 V3 M5 5 H8 M6 5 V3.5" stroke="#56b4a0" stroke-width="1" fill="none"/><rect x="3.4" y="8" width="3.2" height="2.6" fill="#1a1a1a"/><rect x="4.1" y="8.5" width="1.9" height="1.6" fill="#2cb846"/></svg>
<div class="c" style="left:435.5px;width:46px;color:#f0f0f0;">System</div>
<div class="c" style="left:487px;width:310px;color:#f0f0f0;">C:\Windows\System32\ntdll.dll</div>
<div class="vl" style="left:119px;top:0;height:11px"></div>
<div class="vl" style="left:419px;top:0;height:11px"></div>
<div class="vl" style="left:482px;top:0;height:11px"></div>
</div>
</div>
<div class="tbl mono" style="left:821px;top:104px;width:1079px;height:712px">
<div class="hd" style="left:0;width:1079px"></div>
<div class="hd" style="left:4px;background:none">Address</div>
<div class="hd" style="left:124px;background:none">Type</div>
<div class="hd" style="left:174px;background:none">Ordinal</div>
<div class="hd" style="left:231px;background:none">Symbol</div>
<div class="hd" style="left:791px;background:none">Symbol (undecorated)</div>
<div class="hb" style="left:0;top:13px;width:1079px"></div>
<div class="vs" style="left:118px;top:0;height:15px"></div>
<div class="vl" style="left:119px;top:15px;height:698px"></div>
<div class="vs" style="left:168px;top:0;height:15px"></div>
<div class="vl" style="left:169px;top:15px;height:698px"></div>
<div class="vs" style="left:225px;top:0;height:15px"></div>
<div class="vl" style="left:226px;top:15px;height:698px"></div>
<div class="vs" style="left:785px;top:0;height:15px"></div>
<div class="vl" style="left:786px;top:15px;height:698px"></div>
<div class="row" style="top:15px;">
<div class="c" style="left:4px;width:114px;color:#a8a8a8;">00007FFE9179E690</div>
<div class="c" style="left:124px;width:44px;color:#f0f0f0;">Export</div>
<div class="c" style="left:174px;width:50px;color:#f0f0f0;">177</div>
<div class="c" style="left:231px;width:554px;color:#f0f0f0;">LdrSetImplicitPathOptions</div>
</div>
<div class="row" style="top:26px;">
<div class="c" style="left:4px;width:114px;color:#a8a8a8;">00007FFE9179E700</div>
<div class="c" style="left:124px;width:44px;color:#f0f0f0;">Export</div>
<div class="c" style="left:174px;width:50px;color:#f0f0f0;">189</div>
<div class="c" style="left:231px;width:554px;color:#f0f0f0;">LdrVerifyImageMatchesChecksum</div>
</div>
<div class="row" style="top:37px;">
<div class="c" style="left:4px;width:114px;color:#a8a8a8;">00007FFE9179EB30</div>
<div class="c" style="left:124px;width:44px;color:#f0f0f0;">Export</div>
<div class="c" style="left:174px;width:50px;color:#f0f0f0;">1147</div>
<div class="c" style="left:231px;width:554px;color:#f0f0f0;">RtlGetUnloadEventTrace</div>
</div>
<div class="row" style="top:48px;">
<div class="c" style="left:4px;width:114px;color:#a8a8a8;">00007FFE9179ED60</div>
<div class="c" style="left:124px;width:44px;color:#f0f0f0;">Export</div>
<div class="c" style="left:174px;width:50px;color:#f0f0f0;">171</div>
<div class="c" style="left:231px;width:554px;color:#f0f0f0;">LdrResolveDelayLoadsFromDll</div>
</div>
<div class="row" style="top:59px;">
<div class="c" style="left:4px;width:114px;color:#a8a8a8;">00007FFE9179EF70</div>
<div class="c" style="left:124px;width:44px;color:#f0f0f0;">Export</div>
<div class="c" style="left:174px;width:50px;color:#f0f0f0;">954</div>
<div class="c" style="left:231px;width:554px;color:#f0f0f0;">RtlDosLongPathNameToRelativeNtPathName_U_WithStatus</div>
</div>
<div class="row" style="top:70px;">
<div class="c" style="left:4px;width:114px;color:#a8a8a8;">00007FFE9179EFA0</div>
<div class="c" style="left:124px;width:44px;color:#f0f0f0;">Export</div>
<div class="c" style="left:174px;width:50px;color:#f0f0f0;">809</div>
<div class="c" style="left:231px;width:554px;color:#f0f0f0;">RtlCloneUserProcess</div>
</div>
<div class="row" style="top:81px;">
<div class="c" style="left:4px;width:114px;color:#a8a8a8;">00007FFE9179F2B0</div>
<div class="c" style="left:124px;width:44px;color:#f0f0f0;">Export</div>
<div class="c" style="left:174px;width:50px;color:#f0f0f0;">823</div>
<div class="c" style="left:231px;width:554px;color:#f0f0f0;">RtlCompleteProcessCloning</div>
</div>
<div class="row" style="top:92px;">
<div class="c" style="left:4px;width:114px;color:#a8a8a8;">00007FFE9179F3F0</div>
<div class="c" style="left:124px;width:44px;color:#f0f0f0;">Export</div>
<div class="c" style="left:174px;width:50px;color:#f0f0f0;">871</div>
<div class="c" style="left:231px;width:554px;color:#f0f0f0;">RtlCreateProcessParameters</div>
</div>
<div class="row" style="top:103px;">
<div class="c" style="left:4px;width:114px;color:#a8a8a8;">00007FFE9179F460</div>
<div class="c" style="left:124px;width:44px;color:#f0f0f0;">Export</div>
<div class="c" style="left:174px;width:50px;color:#f0f0f0;">1358</div>
<div class="c" style="left:231px;width:554px;color:#f0f0f0;">RtlPrepareForProcessCloning</div>
</div>
<div class="row" style="top:114px;">
<div class="c" style="left:4px;width:114px;color:#a8a8a8;">00007FFE9179F590</div>
<div class="c" style="left:124px;width:44px;color:#f0f0f0;">Export</div>
<div class="c" style="left:174px;width:50px;color:#f0f0f0;">1679</div>
<div class="c" style="left:231px;width:554px;color:#f0f0f0;">RtlWow64LogMessageInEventLogger</div>
</div>
<div class="row" style="top:125px;">
<div class="c" style="left:4px;width:114px;color:#a8a8a8;">00007FFE9179F5C0</div>
<div class="c" style="left:124px;width:44px;color:#f0f0f0;">Export</div>
<div class="c" style="left:174px;width:50px;color:#f0f0f0;">903</div>
<div class="c" style="left:231px;width:554px;color:#f0f0f0;">RtlDecodeRemotePointer</div>
</div>
<div class="row" style="top:136px;">
<div class="c" style="left:4px;width:114px;color:#a8a8a8;">00007FFE9179F630</div>
<div class="c" style="left:124px;width:44px;color:#f0f0f0;">Export</div>
<div class="c" style="left:174px;width:50px;color:#f0f0f0;">972</div>
<div class="c" style="left:231px;width:554px;color:#f0f0f0;">RtlEncodeRemotePointer</div>
</div>
<div class="row" style="top:147px;">
<div class="c" style="left:4px;width:114px;color:#a8a8a8;">00007FFE917A1700</div>
<div class="c" style="left:124px;width:44px;color:#f0f0f0;">Export</div>
<div class="c" style="left:174px;width:50px;color:#f0f0f0;">693</div>
<div class="c" style="left:231px;width:554px;color:#f0f0f0;">NtdllDefWindowProc_A</div>
</div>
<div class="row" style="top:158px;">
<div class="c" style="left:4px;width:114px;color:#a8a8a8;">00007FFE917A1710</div>
<div class="c" style="left:124px;width:44px;color:#f0f0f0;">Export</div>
<div class="c" style="left:174px;width:50px;color:#f0f0f0;">694</div>
<div class="c" style="left:231px;width:554px;color:#f0f0f0;">NtdllDefWindowProc_W</div>
</div>
<div class="row" style="top:169px;">
<div class="c" style="left:4px;width:114px;color:#a8a8a8;">00007FFE917A17C0</div>
<div class="c" style="left:124px;width:44px;color:#f0f0f0;">Export</div>
<div class="c" style="left:174px;width:50px;color:#f0f0f0;">695</div>
<div class="c" style="left:231px;width:554px;color:#f0f0f0;">NtdllDialogWndProc_A</div>
</div>
<div class="row" style="top:180px;">
<div class="c" style="left:4px;width:114px;color:#a8a8a8;">00007FFE917A17D0</div>
<div class="c" style="left:124px;width:44px;color:#f0f0f0;">Export</div>
<div class="c" style="left:174px;width:50px;color:#f0f0f0;">696</div>
<div class="c" style="left:231px;width:554px;color:#f0f0f0;">NtdllDialogWndProc_W</div>
</div>
<div class="row" style="top:191px;">
<div class="c" style="left:4px;width:114px;color:#a8a8a8;">00007FFE917A1A40</div>
<div class="c" style="left:124px;width:44px;color:#f0f0f0;">Export</div>
<div class="c" style="left:174px;width:50px;color:#f0f0f0;">204</div>
<div class="c" style="left:231px;width:554px;color:#f0f0f0;">NtAccessCheck</div>
</div>
<div class="row" style="top:202px;">
<div class="c" style="left:4px;width:114px;color:#a8a8a8;">00007FFE917A1A40</div>
<div class="c" style="left:124px;width:44px;color:#f0f0f0;">Export</div>
<div class="c" style="left:174px;width:50px;color:#f0f0f0;">1852</div>
<div class="c" style="left:231px;width:554px;color:#f0f0f0;">ZwAccessCheck</div>
</div>
<div class="row" style="top:213px;">
<div class="c" style="left:4px;width:114px;color:#a8a8a8;">00007FFE917A1A60</div>
<div class="c" style="left:124px;width:44px;color:#f0f0f0;">Export</div>
<div class="c" style="left:174px;width:50px;color:#f0f0f0;">687</div>
<div class="c" style="left:231px;width:554px;color:#f0f0f0;">NtWorkerFactoryWorkerReady</div>
</div>
<div class="row" style="top:224px;">
<div class="c" style="left:4px;width:114px;color:#a8a8a8;">00007FFE917A1A60</div>
<div class="c" style="left:124px;width:44px;color:#f0f0f0;">Export</div>
<div class="c" style="left:174px;width:50px;color:#f0f0f0;">2334</div>
<div class="c" style="left:231px;width:554px;color:#f0f0f0;">ZwWorkerFactoryWorkerReady</div>
</div>
<div class="row" style="top:235px;">
<div class="c" style="left:4px;width:114px;color:#a8a8a8;">00007FFE917A1A80</div>
<div class="c" style="left:124px;width:44px;color:#f0f0f0;">Export</div>
<div class="c" style="left:174px;width:50px;color:#f0f0f0;">203</div>
<div class="c" style="left:231px;width:554px;color:#f0f0f0;">NtAcceptConnectPort</div>
</div>
<div class="row" style="top:246px;">
<div class="c" style="left:4px;width:114px;color:#a8a8a8;">00007FFE917A1A80</div>
<div class="c" style="left:124px;width:44px;color:#f0f0f0;">Export</div>
<div class="c" style="left:174px;width:50px;color:#f0f0f0;">1851</div>
<div class="c" style="left:231px;width:554px;color:#f0f0f0;">ZwAcceptConnectPort</div>
</div>
<div class="row" style="top:257px;">
<div class="c" style="left:4px;width:114px;color:#a8a8a8;">00007FFE917A1AA0</div>
<div class="c" style="left:124px;width:44px;color:#f0f0f0;">Export</div>
<div class="c" style="left:174px;width:50px;color:#f0f0f0;">2071</div>
<div class="c" style="left:231px;width:554px;color:#f0f0f0;">ZwMapUserPhysicalPagesScatter</div>
</div>
<div class="row" style="top:268px;">
<div class="c" style="left:4px;width:114px;color:#a8a8a8;">00007FFE917A1AA0</div>
<div class="c" style="left:124px;width:44px;color:#f0f0f0;">Export</div>
<div class="c" style="left:174px;width:50px;color:#f0f0f0;">424</div>
<div class="c" style="left:231px;width:554px;color:#f0f0f0;">NtMapUserPhysicalPagesScatter</div>
</div>
<div class="row" style="top:279px;">
<div class="c" style="left:4px;width:114px;color:#a8a8a8;">00007FFE917A1AC0</div>
<div class="c" style="left:124px;width:44px;color:#f0f0f0;">Export</div>
<div class="c" style="left:174px;width:50px;color:#f0f0f0;">683</div>
<div class="c" style="left:231px;width:554px;color:#f0f0f0;">NtWaitForSingleObject</div>
</div>
<div class="row" style="top:290px;">
<div class="c" style="left:4px;width:114px;color:#a8a8a8;">00007FFE917A1AC0</div>
<div class="c" style="left:124px;width:44px;color:#f0f0f0;">Export</div>
<div class="c" style="left:174px;width:50px;color:#f0f0f0;">2330</div>
<div class="c" style="left:231px;width:554px;color:#f0f0f0;">ZwWaitForSingleObject</div>
</div>
<div class="row" style="top:301px;">
<div class="c" style="left:4px;width:114px;color:#a8a8a8;">00007FFE917A1AE0</div>
<div class="c" style="left:124px;width:44px;color:#f0f0f0;">Export</div>
<div class="c" style="left:174px;width:50px;color:#f0f0f0;">1908</div>
<div class="c" style="left:231px;width:554px;color:#f0f0f0;">ZwCallbackReturn</div>
</div>
<div class="row" style="top:312px;">
<div class="c" style="left:4px;width:114px;color:#a8a8a8;">00007FFE917A1AE0</div>
<div class="c" style="left:124px;width:44px;color:#f0f0f0;">Export</div>
<div class="c" style="left:174px;width:50px;color:#f0f0f0;">260</div>
<div class="c" style="left:231px;width:554px;color:#f0f0f0;">NtCallbackReturn</div>
</div>
<div class="row" style="top:323px;">
<div class="c" style="left:4px;width:114px;color:#a8a8a8;">00007FFE917A1B00</div>
<div class="c" style="left:124px;width:44px;color:#f0f0f0;">Export</div>
<div class="c" style="left:174px;width:50px;color:#f0f0f0;">2192</div>
<div class="c" style="left:231px;width:554px;color:#f0f0f0;">ZwReadFile</div>
</div>
<div class="row" style="top:334px;">
<div class="c" style="left:4px;width:114px;color:#a8a8a8;">00007FFE917A1B00</div>
<div class="c" style="left:124px;width:44px;color:#f0f0f0;">Export</div>
<div class="c" style="left:174px;width:50px;color:#f0f0f0;">545</div>
<div class="c" style="left:231px;width:554px;color:#f0f0f0;">NtReadFile</div>
</div>
<div class="row" style="top:345px;">
<div class="c" style="left:4px;width:114px;color:#a8a8a8;">00007FFE917A1B20</div>
<div class="c" style="left:124px;width:44px;color:#f0f0f0;">Export</div>
<div class="c" style="left:174px;width:50px;color:#f0f0f0;">2000</div>
<div class="c" style="left:231px;width:554px;color:#f0f0f0;">ZwDeviceIoControlFile</div>
</div>
<div class="row" style="top:356px;">
<div class="c" style="left:4px;width:114px;color:#a8a8a8;">00007FFE917A1B20</div>
<div class="c" style="left:124px;width:44px;color:#f0f0f0;">Export</div>
<div class="c" style="left:174px;width:50px;color:#f0f0f0;">332</div>
<div class="c" style="left:231px;width:554px;color:#f0f0f0;">NtDeviceIoControlFile</div>
</div>
<div class="row" style="top:367px;background:#414141;">
<div class="c" style="left:4px;width:114px;color:#ffffff;">00007FFE917A1B40</div>
<div class="c" style="left:124px;width:44px;color:#f0f0f0;">Export</div>
<div class="c" style="left:174px;width:50px;color:#f0f0f0;">688</div>
<div class="c" style="left:231px;width:554px;color:#f0f0f0;">NtWriteFile</div>
<div class="vl" style="left:119px;top:0;height:11px"></div>
<div class="vl" style="left:169px;top:0;height:11px"></div>
<div class="vl" style="left:226px;top:0;height:11px"></div>
<div class="vl" style="left:786px;top:0;height:11px"></div>
</div>
<div class="row" style="top:378px;">
<div class="c" style="left:4px;width:114px;color:#a8a8a8;">00007FFE917A1B40</div>
<div class="c" style="left:124px;width:44px;color:#f0f0f0;">Export</div>
<div class="c" style="left:174px;width:50px;color:#f0f0f0;">2335</div>
<div class="c" style="left:231px;width:554px;color:#f0f0f0;">ZwWriteFile</div>
</div>
<div class="row" style="top:389px;">
<div class="c" style="left:4px;width:114px;color:#a8a8a8;">00007FFE917A1B60</div>
<div class="c" style="left:124px;width:44px;color:#f0f0f0;">Export</div>
<div class="c" style="left:174px;width:50px;color:#f0f0f0;">2207</div>
<div class="c" style="left:231px;width:554px;color:#f0f0f0;">ZwRemoveIoCompletion</div>
</div>
<div class="row" style="top:400px;">
<div class="c" style="left:4px;width:114px;color:#a8a8a8;">00007FFE917A1B60</div>
<div class="c" style="left:124px;width:44px;color:#f0f0f0;">Export</div>
<div class="c" style="left:174px;width:50px;color:#f0f0f0;">560</div>
<div class="c" style="left:231px;width:554px;color:#f0f0f0;">NtRemoveIoCompletion</div>
</div>
<div class="row" style="top:411px;">
<div class="c" style="left:4px;width:114px;color:#a8a8a8;">00007FFE917A1B80</div>
<div class="c" style="left:124px;width:44px;color:#f0f0f0;">Export</div>
<div class="c" style="left:174px;width:50px;color:#f0f0f0;">2205</div>
<div class="c" style="left:231px;width:554px;color:#f0f0f0;">ZwReleaseSemaphore</div>
</div>
<div class="row" style="top:422px;">
<div class="c" style="left:4px;width:114px;color:#a8a8a8;">00007FFE917A1B80</div>
<div class="c" style="left:124px;width:44px;color:#f0f0f0;">Export</div>
<div class="c" style="left:174px;width:50px;color:#f0f0f0;">558</div>
<div class="c" style="left:231px;width:554px;color:#f0f0f0;">NtReleaseSemaphore</div>
</div>
<div class="row" style="top:433px;">
<div class="c" style="left:4px;width:114px;color:#a8a8a8;">00007FFE917A1BA0</div>
<div class="c" style="left:124px;width:44px;color:#f0f0f0;">Export</div>
<div class="c" style="left:174px;width:50px;color:#f0f0f0;">568</div>
<div class="c" style="left:231px;width:554px;color:#f0f0f0;">NtReplyWaitReceivePort</div>
</div>
<div class="row" style="top:444px;">
<div class="c" style="left:4px;width:114px;color:#a8a8a8;">00007FFE917A1BA0</div>
<div class="c" style="left:124px;width:44px;color:#f0f0f0;">Export</div>
<div class="c" style="left:174px;width:50px;color:#f0f0f0;">2215</div>
<div class="c" style="left:231px;width:554px;color:#f0f0f0;">ZwReplyWaitReceivePort</div>
</div>
<div class="row" style="top:455px;">
<div class="c" style="left:4px;width:114px;color:#a8a8a8;">00007FFE917A1BC0</div>
<div class="c" style="left:124px;width:44px;color:#f0f0f0;">Export</div>
<div class="c" style="left:174px;width:50px;color:#f0f0f0;">567</div>
<div class="c" style="left:231px;width:554px;color:#f0f0f0;">NtReplyPort</div>
</div>
<div class="row" style="top:466px;">
<div class="c" style="left:4px;width:114px;color:#a8a8a8;">00007FFE917A1BC0</div>
<div class="c" style="left:124px;width:44px;color:#f0f0f0;">Export</div>
<div class="c" style="left:174px;width:50px;color:#f0f0f0;">2214</div>
<div class="c" style="left:231px;width:554px;color:#f0f0f0;">ZwReplyPort</div>
</div>
<div class="row" style="top:477px;">
<div class="c" style="left:4px;width:114px;color:#a8a8a8;">00007FFE917A1BE0</div>
<div class="c" style="left:124px;width:44px;color:#f0f0f0;">Export</div>
<div class="c" style="left:174px;width:50px;color:#f0f0f0;">617</div>
<div class="c" style="left:231px;width:554px;color:#f0f0f0;">NtSetInformationThread</div>
</div>
<div class="row" style="top:488px;">
<div class="c" style="left:4px;width:114px;color:#a8a8a8;">00007FFE917A1BE0</div>
<div class="c" style="left:124px;width:44px;color:#f0f0f0;">Export</div>
<div class="c" style="left:174px;width:50px;color:#f0f0f0;">2264</div>
<div class="c" style="left:231px;width:554px;color:#f0f0f0;">ZwSetInformationThread</div>
</div>
<div class="row" style="top:499px;">
<div class="c" style="left:4px;width:114px;color:#a8a8a8;">00007FFE917A1C00</div>
<div class="c" style="left:124px;width:44px;color:#f0f0f0;">Export</div>
<div class="c" style="left:174px;width:50px;color:#f0f0f0;">2247</div>
<div class="c" style="left:231px;width:554px;color:#f0f0f0;">ZwSetEvent</div>
</div>
<div class="row" style="top:510px;">
<div class="c" style="left:4px;width:114px;color:#a8a8a8;">00007FFE917A1C00</div>
<div class="c" style="left:124px;width:44px;color:#f0f0f0;">Export</div>
<div class="c" style="left:174px;width:50px;color:#f0f0f0;">600</div>
<div class="c" style="left:231px;width:554px;color:#f0f0f0;">NtSetEvent</div>
</div>
<div class="row" style="top:521px;">
<div class="c" style="left:4px;width:114px;color:#a8a8a8;">00007FFE917A1C20</div>
<div class="c" style="left:124px;width:44px;color:#f0f0f0;">Export</div>
<div class="c" style="left:174px;width:50px;color:#f0f0f0;">270</div>
<div class="c" style="left:231px;width:554px;color:#f0f0f0;">NtClose</div>
</div>
<div class="row" style="top:532px;">
<div class="c" style="left:4px;width:114px;color:#a8a8a8;">00007FFE917A1C20</div>
<div class="c" style="left:124px;width:44px;color:#f0f0f0;">Export</div>
<div class="c" style="left:174px;width:50px;color:#f0f0f0;">1918</div>
<div class="c" style="left:231px;width:554px;color:#f0f0f0;">ZwClose</div>
</div>
<div class="row" style="top:543px;">
<div class="c" style="left:4px;width:114px;color:#a8a8a8;">00007FFE917A1C40</div>
<div class="c" style="left:124px;width:44px;color:#f0f0f0;">Export</div>
<div class="c" style="left:174px;width:50px;color:#f0f0f0;">516</div>
<div class="c" style="left:231px;width:554px;color:#f0f0f0;">NtQueryObject</div>
</div>
<div class="row" style="top:554px;">
<div class="c" style="left:4px;width:114px;color:#a8a8a8;">00007FFE917A1C40</div>
<div class="c" style="left:124px;width:44px;color:#f0f0f0;">Export</div>
<div class="c" style="left:174px;width:50px;color:#f0f0f0;">2163</div>
<div class="c" style="left:231px;width:554px;color:#f0f0f0;">ZwQueryObject</div>
</div>
<div class="row" style="top:565px;">
<div class="c" style="left:4px;width:114px;color:#a8a8a8;">00007FFE917A1C60</div>
<div class="c" style="left:124px;width:44px;color:#f0f0f0;">Export</div>
<div class="c" style="left:174px;width:50px;color:#f0f0f0;">498</div>
<div class="c" style="left:231px;width:554px;color:#f0f0f0;">NtQueryInformationFile</div>
</div>
<div class="row" style="top:576px;">
<div class="c" style="left:4px;width:114px;color:#a8a8a8;">00007FFE917A1C60</div>
<div class="c" style="left:124px;width:44px;color:#f0f0f0;">Export</div>
<div class="c" style="left:174px;width:50px;color:#f0f0f0;">2145</div>
<div class="c" style="left:231px;width:554px;color:#f0f0f0;">ZwQueryInformationFile</div>
</div>
<div class="row" style="top:587px;">
<div class="c" style="left:4px;width:114px;color:#a8a8a8;">00007FFE917A1C80</div>
<div class="c" style="left:124px;width:44px;color:#f0f0f0;">Export</div>
<div class="c" style="left:174px;width:50px;color:#f0f0f0;">2089</div>
<div class="c" style="left:231px;width:554px;color:#f0f0f0;">ZwOpenKey</div>
</div>
<div class="row" style="top:598px;">
<div class="c" style="left:4px;width:114px;color:#a8a8a8;">00007FFE917A1C80</div>
<div class="c" style="left:124px;width:44px;color:#f0f0f0;">Export</div>
<div class="c" style="left:174px;width:50px;color:#f0f0f0;">442</div>
<div class="c" style="left:231px;width:554px;color:#f0f0f0;">NtOpenKey</div>
</div>
<div class="row" style="top:609px;">
<div class="c" style="left:4px;width:114px;color:#a8a8a8;">00007FFE917A1CA0</div>
<div class="c" style="left:124px;width:44px;color:#f0f0f0;">Export</div>
<div class="c" style="left:174px;width:50px;color:#f0f0f0;">365</div>
<div class="c" style="left:231px;width:554px;color:#f0f0f0;">NtEnumerateValueKey</div>
</div>
<div class="row" style="top:620px;">
<div class="c" style="left:4px;width:114px;color:#a8a8a8;">00007FFE917A1CA0</div>
<div class="c" style="left:124px;width:44px;color:#f0f0f0;">Export</div>
<div class="c" style="left:174px;width:50px;color:#f0f0f0;">2013</div>
<div class="c" style="left:231px;width:554px;color:#f0f0f0;">ZwEnumerateValueKey</div>
</div>
<div class="row" style="top:631px;">
<div class="c" style="left:4px;width:114px;color:#a8a8a8;">00007FFE917A1CC0</div>
<div class="c" style="left:124px;width:44px;color:#f0f0f0;">Export</div>
<div class="c" style="left:174px;width:50px;color:#f0f0f0;">2018</div>
<div class="c" style="left:231px;width:554px;color:#f0f0f0;">ZwFindAtom</div>
</div>
<div class="row" style="top:642px;">
<div class="c" style="left:4px;width:114px;color:#a8a8a8;">00007FFE917A1CC0</div>
<div class="c" style="left:124px;width:44px;color:#f0f0f0;">Export</div>
<div class="c" style="left:174px;width:50px;color:#f0f0f0;">370</div>
<div class="c" style="left:231px;width:554px;color:#f0f0f0;">NtFindAtom</div>
</div>
<div class="row" style="top:653px;">
<div class="c" style="left:4px;width:114px;color:#a8a8a8;">00007FFE917A1CE0</div>
<div class="c" style="left:124px;width:44px;color:#f0f0f0;">Export</div>
<div class="c" style="left:174px;width:50px;color:#f0f0f0;">485</div>
<div class="c" style="left:231px;width:554px;color:#f0f0f0;">NtQueryDefaultLocale</div>
</div>
<div class="row" style="top:664px;">
<div class="c" style="left:4px;width:114px;color:#a8a8a8;">00007FFE917A1CE0</div>
<div class="c" style="left:124px;width:44px;color:#f0f0f0;">Export</div>
<div class="c" style="left:174px;width:50px;color:#f0f0f0;">2132</div>
<div class="c" style="left:231px;width:554px;color:#f0f0f0;">ZwQueryDefaultLocale</div>
</div>
<div class="row" style="top:675px;">
<div class="c" style="left:4px;width:114px;color:#a8a8a8;">00007FFE917A1D00</div>
<div class="c" style="left:124px;width:44px;color:#f0f0f0;">Export</div>
<div class="c" style="left:174px;width:50px;color:#f0f0f0;">512</div>
<div class="c" style="left:231px;width:554px;color:#f0f0f0;">NtQueryKey</div>
</div>
<div class="row" style="top:686px;">
<div class="c" style="left:4px;width:114px;color:#a8a8a8;">00007FFE917A1D00</div>
<div class="c" style="left:124px;width:44px;color:#f0f0f0;">Export</div>
<div class="c" style="left:174px;width:50px;color:#f0f0f0;">2159</div>
<div class="c" style="left:231px;width:554px;color:#f0f0f0;">ZwQueryKey</div>
</div>
<div class="row" style="top:697px;">
<div class="c" style="left:4px;width:114px;color:#a8a8a8;">00007FFE917A1D20</div>
<div class="c" style="left:124px;width:44px;color:#f0f0f0;">Export</div>
<div class="c" style="left:174px;width:50px;color:#f0f0f0;">2182</div>
<div class="c" style="left:231px;width:554px;color:#f0f0f0;">ZwQueryValueKey</div>
</div>
<div class="row" style="top:708px;">
<div class="c" style="left:4px;width:114px;color:#a8a8a8;">00007FFE917A1D20</div>
<div class="c" style="left:124px;width:44px;color:#f0f0f0;">Export</div>
<div class="c" style="left:174px;width:50px;color:#f0f0f0;">525</div>
<div class="c" style="left:231px;width:554px;color:#f0f0f0;">NtQueryValueKey</div>
</div>
</div>
<div class="a" style="left:818px;top:104px;width:2px;height:757px;background:#525252"></div>
<div class="sb" style="left:803px;top:120px;width:10px;height:679px"></div>
<div class="th" style="left:803px;top:161px;width:10px;height:638px"></div>
<svg style="left:0;top:0" width="1920" height="1034"><polygon points="804,115.9 812,115.9 808,109.1" fill="#a0a0a0"/></svg>
<svg style="left:0;top:0" width="1920" height="1034"><polygon points="804,804.6 812,804.6 808,811.4" fill="#a0a0a0"/></svg>
<div class="sb" style="left:18px;top:820px;width:765px;height:10px"></div>
<div class="th" style="left:18px;top:820px;width:600px;height:10px"></div>
<svg style="left:0;top:0" width="1920" height="1034"><polygon points="13.9,821 13.9,829 7.1,825" fill="#a0a0a0"/></svg>
<svg style="left:0;top:0" width="1920" height="1034"><polygon points="787.6,821 787.6,829 794.4,825" fill="#a0a0a0"/></svg>
<div class="sb" style="left:1904px;top:120px;width:10px;height:679px"></div>
<div class="th" style="left:1904px;top:438px;width:10px;height:149px"></div>
<svg style="left:0;top:0" width="1920" height="1034"><polygon points="1905,115.9 1913,115.9 1909,109.1" fill="#a0a0a0"/></svg>
<svg style="left:0;top:0" width="1920" height="1034"><polygon points="1905,804.6 1913,804.6 1909,811.4" fill="#a0a0a0"/></svg>
<div class="sb" style="left:837px;top:820px;width:1047px;height:10px"></div>
<div class="th" style="left:837px;top:820px;width:288px;height:10px"></div>
<svg style="left:0;top:0" width="1920" height="1034"><polygon points="831.9,821 831.9,829 825.1,825" fill="#a0a0a0"/></svg>
<svg style="left:0;top:0" width="1920" height="1034"><polygon points="1888.1,821 1888.1,829 1894.9,825" fill="#a0a0a0"/></svg>
<div class="a" style="left:1px;top:835px;width:817px;height:5px;background:#525252"></div>
<div class="a" style="left:820px;top:835px;width:1099px;height:5px;background:#525252"></div>
<div class="a" style="left:1px;top:860px;width:1918px;height:5px;background:#525252"></div>
<div class="ui" style="letter-spacing:-0.203px;left:4.5px;top:843px">Search:</div>
<div class="a" style="left:48px;top:840px;width:714px;height:20px;background:#323232;border:1px solid #3e3e3e;border-radius:2px"></div>
<div class="a" style="left:51px;top:843px;width:1px;height:14px;background:#f0f0f0"></div>
<div class="ui" style="letter-spacing:0.046px;left:52px;top:843px;color:#8e8e8e">Type here to filter results...</div>
<div class="a" style="left:765px;top:841px;width:16px;height:16px;border:1px solid #8c8c8c;border-radius:3px;background:#212121"></div>
<div class="ui" style="letter-spacing:-0.059px;left:786px;top:843px">Regex</div>
<div class="ui" style="letter-spacing:-0.203px;left:823.5px;top:843px">Search:</div>
<div class="a" style="left:867px;top:841px;width:949px;height:18px;background:#303030;border-radius:3px"></div>
<div class="ui" style="letter-spacing:0.046px;left:869px;top:843px;color:#8e8e8e">Type here to filter results...</div>
<div class="a" style="left:1820px;top:841px;width:16px;height:16px;border:1px solid #8c8c8c;border-radius:3px;background:#212121"></div>
<div class="ui" style="letter-spacing:-0.562px;left:1841px;top:843px">Lock</div>
<div class="a" style="left:1866px;top:841px;width:16px;height:16px;border:1px solid #8c8c8c;border-radius:3px;background:#212121"></div>
<div class="ui" style="letter-spacing:-0.059px;left:1887px;top:843px">Regex</div>
<div class="a" style="left:0;top:865px;width:1900px;height:112px;overflow:hidden">
<div class="log" style="top:-3px">[DIA] Skipping non-existent PDB: C:\tools\x64dbg\release\x64\symbols\Windows.Web.pdb\6ADCB689B47E66F5CC93EAEBDCE7CECB1\Windows.Web.pdb</div>
<div class="log" style="top:11px">No symbols loaded for: windows.web.dll</div>
<div class="log" style="top:25px">[DIA] Skipping non-existent PDB: C:\Windows\System32\Windows.Web.pdb</div>
<div class="log" style="top:39px">No symbols loaded for: windows.web.dll</div>
<div class="log" style="top:53px">[DIA] Skipping non-existent PDB: C:\Windows\System32\windows.web.pdb</div>
<div class="log" style="top:67px">No symbols loaded for: windows.web.dll</div>
</div>
<div class="sb" style="left:1904px;top:882px;width:10px;height:61px"></div>
<div class="th" style="left:1904px;top:918.6px;width:10px;height:24.4px"></div>
<svg style="left:0;top:0" width="1920" height="1034"><polygon points="1905,877.4 1913,877.4 1909,870.6" fill="#a0a0a0"/></svg>
<svg style="left:0;top:0" width="1920" height="1034"><polygon points="1905,947.6 1913,947.6 1909,954.4" fill="#a0a0a0"/></svg>
<div class="ui" style="letter-spacing:-0.475px;left:1px;top:988px">Command:</div>
<div class="a" style="left:56px;top:985px;width:1757.5px;height:18px;background:#303030;border-radius:3px"></div>
<div class="a" style="left:59px;top:988px;font-family:'Liberation Mono',monospace;font-size:11.67px;line-height:14px;color:#858585">Commands are comma separated (like assembly instructions): mov eax, ebx</div>
<div class="a" style="left:1815px;top:980px;width:104px;height:28px;background:#212121;border:1px solid #4c4c4c;border-radius:3px"></div>
<div class="ui" style="letter-spacing:0.163px;left:1820px;top:988px">Default</div>
<svg style="left:0;top:0" width="1920" height="1034"><polygon points="1906.6,991.9060000000001 1914.0,991.9060000000001 1910.3,996.494" fill="#a8a8a8"/></svg>
<div class="ui" style="letter-spacing:-0.385px;left:15px;top:1014px;color:#9a9a32">Paused</div>
<div class="ui" style="letter-spacing:0.070px;left:71.5px;top:1014px">ntdll.dll:</div>
<div class="ui" style="letter-spacing:-0.359px;left:112.5px;top:1014px;color:#7b93ff;text-decoration:underline">00007FFE917A1B48</div>
<div class="ui" style="letter-spacing:0.703px;left:213px;top:1014px">-&gt;</div>
<div class="ui" style="letter-spacing:-0.359px;left:227.5px;top:1014px;color:#7b93ff;text-decoration:underline">00007FFE917A1B56</div>
<div class="ui" style="letter-spacing:-0.019px;left:327.5px;top:1014px">(0x0000000F bytes)</div>
<div class="ui" style="letter-spacing:-0.026px;left:1742px;top:1015px">Time Wasted Debugging: 0:00:14:41</div>
<div class="a" style="left:0;top:1031px;width:1920px;height:3px;background:#3a3a3a"></div>
<div class="red" style="left:684px;top:67px;width:137px;height:46px"></div>
<div class="red" style="left:823px;top:460px;width:406px;height:33px"></div>
<div class="red" style="left:0px;top:785px;width:345px;height:43px"></div>
</body></html>
